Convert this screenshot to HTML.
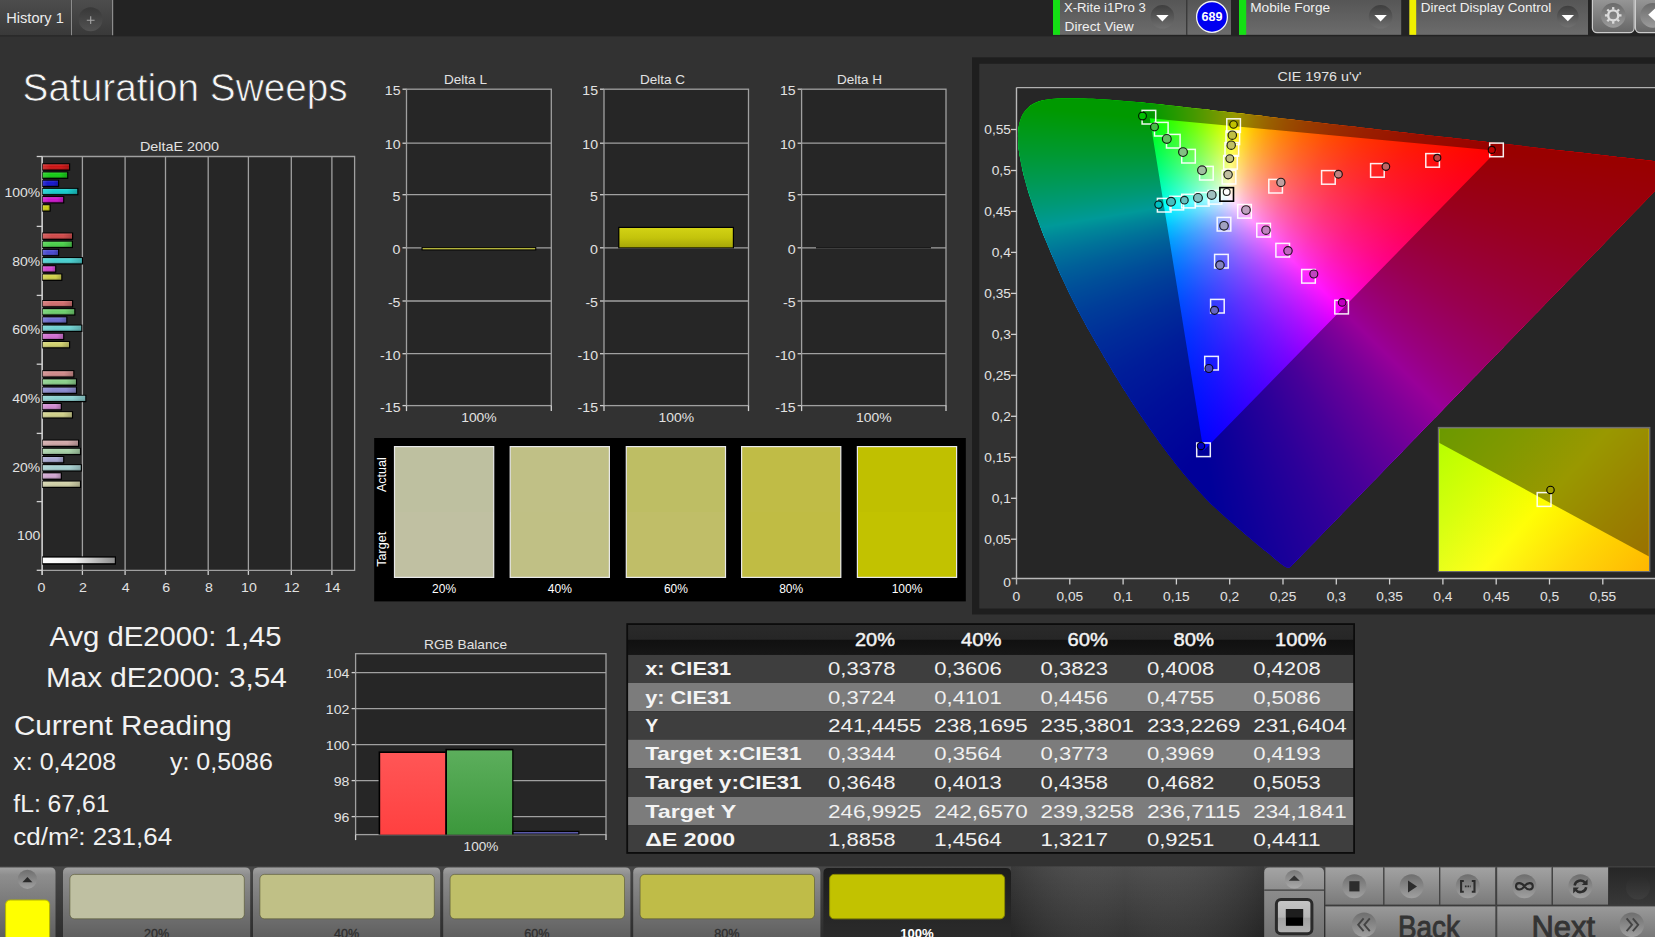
<!DOCTYPE html>
<html><head><meta charset="utf-8"><title>Saturation Sweeps</title>
<style>html,body{margin:0;padding:0;background:#323232;overflow:hidden}svg{display:block;font-family:'Liberation Sans', sans-serif}text{white-space:pre}</style></head>
<body>
<svg width="1655" height="937" viewBox="0 0 1655 937">
<defs>
<linearGradient id="tab" x1="0" y1="0" x2="0" y2="1"><stop offset="0" stop-color="#4d4d4d"/><stop offset="1" stop-color="#393939"/></linearGradient>
<linearGradient id="btn" x1="0" y1="0" x2="0" y2="1"><stop offset="0" stop-color="#565656"/><stop offset="1" stop-color="#6c6c6c"/></linearGradient>
<linearGradient id="dd" x1="0" y1="0" x2="0" y2="1"><stop offset="0" stop-color="#3e3e3e"/><stop offset="1" stop-color="#707070"/></linearGradient>
<linearGradient id="gear" x1="0" y1="0" x2="0" y2="1"><stop offset="0" stop-color="#5a5a5a"/><stop offset="0.5" stop-color="#4a4a4a"/><stop offset="1" stop-color="#6a6a6a"/></linearGradient>
<linearGradient id="plusc" x1="0" y1="0" x2="0" y2="1"><stop offset="0" stop-color="#383838"/><stop offset="1" stop-color="#525252"/></linearGradient>
<linearGradient id="gearb" x1="0" y1="0" x2="0" y2="1"><stop offset="0" stop-color="#9e9e9e"/><stop offset="1" stop-color="#666666"/></linearGradient>
<linearGradient id="gearc" x1="0" y1="0" x2="0" y2="1"><stop offset="0" stop-color="#6a6a6a"/><stop offset="1" stop-color="#9c9c9c"/></linearGradient>
<linearGradient id="barsh" x1="0" y1="0" x2="0" y2="1"><stop offset="0" stop-color="rgba(255,255,255,0.16)"/><stop offset="0.45" stop-color="rgba(255,255,255,0)"/><stop offset="1" stop-color="rgba(0,0,0,0.22)"/></linearGradient>
<linearGradient id="barshh" x1="0" y1="0" x2="1" y2="0"><stop offset="0" stop-color="rgba(255,255,255,0.12)"/><stop offset="0.3" stop-color="rgba(255,255,255,0)"/><stop offset="0.7" stop-color="rgba(0,0,0,0)"/><stop offset="1" stop-color="rgba(0,0,0,0.18)"/></linearGradient>
<linearGradient id="wbar" x1="0" y1="0" x2="1" y2="0"><stop offset="0" stop-color="#ffffff"/><stop offset="0.45" stop-color="#f0f0f0"/><stop offset="1" stop-color="#8c8c8c"/></linearGradient>
<linearGradient id="ybar" x1="0" y1="0" x2="0" y2="1"><stop offset="0" stop-color="#d2d214"/><stop offset="0.5" stop-color="#c4c40c"/><stop offset="1" stop-color="#a6a608"/></linearGradient>
<clipPath id="locus"><path d="M1290.3 567.0C1290.1 567.0 1289.9 567.5 1289.1 567.5C1288.3 567.5 1287.1 567.6 1285.4 566.7C1283.7 565.8 1282.0 564.5 1278.9 562.0C1275.8 559.5 1272.0 556.2 1266.7 551.8C1261.3 547.4 1255.2 542.6 1246.8 535.4C1238.5 528.3 1225.0 516.8 1216.6 509.0C1208.2 501.2 1204.4 497.3 1196.6 488.6C1188.9 479.8 1179.7 469.2 1170.1 456.5C1160.4 443.8 1149.6 429.0 1138.8 412.6C1127.9 396.2 1115.9 376.9 1104.8 358.0C1093.7 339.0 1081.8 318.2 1072.1 298.9C1062.4 279.6 1053.7 259.6 1046.5 242.2C1039.4 224.8 1033.6 208.3 1029.2 194.4C1024.8 180.5 1022.1 168.9 1020.2 158.9C1018.3 148.8 1017.8 141.1 1018.0 134.1C1018.2 127.2 1019.5 121.8 1021.4 117.1C1023.4 112.5 1026.3 109.0 1029.6 106.3C1032.9 103.6 1036.9 102.1 1041.1 100.8C1045.4 99.6 1050.1 99.2 1054.9 98.8C1059.7 98.4 1062.2 98.2 1069.9 98.3C1077.5 98.4 1089.8 98.6 1101.0 99.2C1112.1 99.9 1123.5 100.9 1136.6 102.1C1149.8 103.4 1163.7 104.9 1179.7 106.6C1195.7 108.4 1213.1 110.4 1232.5 112.6C1251.9 114.8 1273.3 117.3 1296.2 119.9C1319.1 122.6 1344.8 125.5 1369.9 128.4C1395.0 131.3 1422.1 134.5 1446.6 137.3C1471.1 140.1 1495.9 142.9 1516.6 145.3C1537.4 147.7 1555.6 149.8 1571.1 151.6C1586.6 153.4 1598.6 154.8 1609.7 156.0C1620.9 157.3 1630.2 158.4 1638.0 159.3C1645.8 160.2 1651.7 160.9 1656.6 161.4C1661.6 162.0 1664.2 162.3 1667.7 162.7C1671.1 163.1 1675.1 163.6 1677.3 163.8C1679.5 164.1 1680.4 164.2 1681.0 164.3Z"/></clipPath>
<clipPath id="plotclip"><rect x="1016.5" y="87.6" width="643.5" height="490.9"/></clipPath>
<linearGradient id="w1" gradientUnits="userSpaceOnUse" x1="1227.4" y1="195.6" x2="1487.3" y2="149.9"><stop offset="0" stop-color="#ffffff"/><stop offset="0.25" stop-color="#ff605e"/><stop offset="0.5" stop-color="#ff2c2a"/><stop offset="0.75" stop-color="#ff1210"/><stop offset="1" stop-color="#ff0200"/></linearGradient>
<linearGradient id="w2" gradientUnits="userSpaceOnUse" x1="1227.4" y1="195.6" x2="1468.0" y2="148.1"><stop offset="0" stop-color="#ffffff"/><stop offset="0.25" stop-color="#ff6762"/><stop offset="0.5" stop-color="#ff322c"/><stop offset="0.75" stop-color="#ff1711"/><stop offset="1" stop-color="#ff0700"/></linearGradient>
<linearGradient id="w3" gradientUnits="userSpaceOnUse" x1="1227.4" y1="195.6" x2="1448.7" y2="146.3"><stop offset="0" stop-color="#ffffff"/><stop offset="0.25" stop-color="#ff6e66"/><stop offset="0.5" stop-color="#ff392e"/><stop offset="0.75" stop-color="#ff1e12"/><stop offset="1" stop-color="#ff0d00"/></linearGradient>
<linearGradient id="w4" gradientUnits="userSpaceOnUse" x1="1227.4" y1="195.6" x2="1429.4" y2="144.5"><stop offset="0" stop-color="#ffffff"/><stop offset="0.25" stop-color="#ff756a"/><stop offset="0.5" stop-color="#ff4131"/><stop offset="0.75" stop-color="#ff2513"/><stop offset="1" stop-color="#ff1400"/></linearGradient>
<linearGradient id="w5" gradientUnits="userSpaceOnUse" x1="1227.4" y1="195.6" x2="1410.2" y2="142.6"><stop offset="0" stop-color="#ffffff"/><stop offset="0.25" stop-color="#ff7e6e"/><stop offset="0.5" stop-color="#ff4934"/><stop offset="0.75" stop-color="#ff2d14"/><stop offset="1" stop-color="#ff1b00"/></linearGradient>
<linearGradient id="w6" gradientUnits="userSpaceOnUse" x1="1227.4" y1="195.6" x2="1390.9" y2="140.8"><stop offset="0" stop-color="#ffffff"/><stop offset="0.25" stop-color="#ff8773"/><stop offset="0.5" stop-color="#ff5337"/><stop offset="0.75" stop-color="#ff3615"/><stop offset="1" stop-color="#ff2400"/></linearGradient>
<linearGradient id="w7" gradientUnits="userSpaceOnUse" x1="1227.4" y1="195.6" x2="1371.6" y2="139.0"><stop offset="0" stop-color="#ffffff"/><stop offset="0.25" stop-color="#ff9178"/><stop offset="0.5" stop-color="#ff5e3b"/><stop offset="0.75" stop-color="#ff4117"/><stop offset="1" stop-color="#ff2e00"/></linearGradient>
<linearGradient id="w8" gradientUnits="userSpaceOnUse" x1="1227.4" y1="195.6" x2="1352.3" y2="137.2"><stop offset="0" stop-color="#ffffff"/><stop offset="0.25" stop-color="#ff9c7e"/><stop offset="0.5" stop-color="#ff6b3f"/><stop offset="0.75" stop-color="#ff4e19"/><stop offset="1" stop-color="#ff3a00"/></linearGradient>
<linearGradient id="w9" gradientUnits="userSpaceOnUse" x1="1227.4" y1="195.6" x2="1333.0" y2="135.4"><stop offset="0" stop-color="#ffffff"/><stop offset="0.25" stop-color="#ffa885"/><stop offset="0.5" stop-color="#ff7944"/><stop offset="0.75" stop-color="#ff5d1b"/><stop offset="1" stop-color="#ff4900"/></linearGradient>
<linearGradient id="w10" gradientUnits="userSpaceOnUse" x1="1227.4" y1="195.6" x2="1313.7" y2="133.6"><stop offset="0" stop-color="#ffffff"/><stop offset="0.25" stop-color="#ffb58c"/><stop offset="0.5" stop-color="#ff8a49"/><stop offset="0.75" stop-color="#ff6f1e"/><stop offset="1" stop-color="#ff5b00"/></linearGradient>
<linearGradient id="w11" gradientUnits="userSpaceOnUse" x1="1227.4" y1="195.6" x2="1294.4" y2="131.8"><stop offset="0" stop-color="#ffffff"/><stop offset="0.25" stop-color="#ffc493"/><stop offset="0.5" stop-color="#ff9e50"/><stop offset="0.75" stop-color="#ff8522"/><stop offset="1" stop-color="#ff7200"/></linearGradient>
<linearGradient id="w12" gradientUnits="userSpaceOnUse" x1="1227.4" y1="195.6" x2="1275.1" y2="130.0"><stop offset="0" stop-color="#ffffff"/><stop offset="0.25" stop-color="#ffd49c"/><stop offset="0.5" stop-color="#ffb758"/><stop offset="0.75" stop-color="#ffa126"/><stop offset="1" stop-color="#ff9000"/></linearGradient>
<linearGradient id="w13" gradientUnits="userSpaceOnUse" x1="1227.4" y1="195.6" x2="1255.8" y2="128.2"><stop offset="0" stop-color="#ffffff"/><stop offset="0.25" stop-color="#ffe7a6"/><stop offset="0.5" stop-color="#ffd462"/><stop offset="0.75" stop-color="#ffc52c"/><stop offset="1" stop-color="#ffb900"/></linearGradient>
<linearGradient id="w14" gradientUnits="userSpaceOnUse" x1="1227.4" y1="195.6" x2="1236.6" y2="126.4"><stop offset="0" stop-color="#ffffff"/><stop offset="0.25" stop-color="#fffcb1"/><stop offset="0.5" stop-color="#fff96e"/><stop offset="0.75" stop-color="#fff734"/><stop offset="1" stop-color="#fff500"/></linearGradient>
<linearGradient id="w15" gradientUnits="userSpaceOnUse" x1="1227.4" y1="195.6" x2="1217.3" y2="124.6"><stop offset="0" stop-color="#ffffff"/><stop offset="0.25" stop-color="#ebffb0"/><stop offset="0.5" stop-color="#dbff6c"/><stop offset="0.75" stop-color="#cdff32"/><stop offset="1" stop-color="#c0ff00"/></linearGradient>
<linearGradient id="w16" gradientUnits="userSpaceOnUse" x1="1227.4" y1="195.6" x2="1198.0" y2="122.7"><stop offset="0" stop-color="#ffffff"/><stop offset="0.25" stop-color="#d6ffac"/><stop offset="0.5" stop-color="#b4ff68"/><stop offset="0.75" stop-color="#98ff30"/><stop offset="1" stop-color="#81ff00"/></linearGradient>
<linearGradient id="w17" gradientUnits="userSpaceOnUse" x1="1227.4" y1="195.6" x2="1178.7" y2="120.9"><stop offset="0" stop-color="#ffffff"/><stop offset="0.25" stop-color="#c1ffa9"/><stop offset="0.5" stop-color="#90ff64"/><stop offset="0.75" stop-color="#69ff2d"/><stop offset="1" stop-color="#48ff00"/></linearGradient>
<linearGradient id="w18" gradientUnits="userSpaceOnUse" x1="1227.4" y1="195.6" x2="1159.4" y2="119.1"><stop offset="0" stop-color="#ffffff"/><stop offset="0.25" stop-color="#adffa5"/><stop offset="0.5" stop-color="#6fff61"/><stop offset="0.75" stop-color="#3eff2b"/><stop offset="1" stop-color="#17ff00"/></linearGradient>
<linearGradient id="w19" gradientUnits="userSpaceOnUse" x1="1227.4" y1="195.6" x2="1151.2" y2="127.5"><stop offset="0" stop-color="#ffffff"/><stop offset="0.25" stop-color="#a5ffac"/><stop offset="0.5" stop-color="#61ff6d"/><stop offset="0.75" stop-color="#2bff3c"/><stop offset="1" stop-color="#00ff14"/></linearGradient>
<linearGradient id="w20" gradientUnits="userSpaceOnUse" x1="1227.4" y1="195.6" x2="1154.2" y2="145.9"><stop offset="0" stop-color="#ffffff"/><stop offset="0.25" stop-color="#a8ffbe"/><stop offset="0.5" stop-color="#64ff8b"/><stop offset="0.75" stop-color="#2dff62"/><stop offset="1" stop-color="#00ff40"/></linearGradient>
<linearGradient id="w21" gradientUnits="userSpaceOnUse" x1="1227.4" y1="195.6" x2="1157.2" y2="164.4"><stop offset="0" stop-color="#ffffff"/><stop offset="0.25" stop-color="#acffd1"/><stop offset="0.5" stop-color="#68ffac"/><stop offset="0.75" stop-color="#30ff8d"/><stop offset="1" stop-color="#00ff72"/></linearGradient>
<linearGradient id="w22" gradientUnits="userSpaceOnUse" x1="1227.4" y1="195.6" x2="1160.2" y2="182.9"><stop offset="0" stop-color="#ffffff"/><stop offset="0.25" stop-color="#b0ffe5"/><stop offset="0.5" stop-color="#6cffcf"/><stop offset="0.75" stop-color="#32ffbc"/><stop offset="1" stop-color="#00ffab"/></linearGradient>
<linearGradient id="w23" gradientUnits="userSpaceOnUse" x1="1227.4" y1="195.6" x2="1163.2" y2="201.4"><stop offset="0" stop-color="#ffffff"/><stop offset="0.25" stop-color="#b4fff9"/><stop offset="0.5" stop-color="#71fff5"/><stop offset="0.75" stop-color="#35fff0"/><stop offset="1" stop-color="#00ffec"/></linearGradient>
<linearGradient id="w24" gradientUnits="userSpaceOnUse" x1="1227.4" y1="195.6" x2="1166.2" y2="219.8"><stop offset="0" stop-color="#ffffff"/><stop offset="0.25" stop-color="#adf0ff"/><stop offset="0.5" stop-color="#69e4ff"/><stop offset="0.75" stop-color="#30d9ff"/><stop offset="1" stop-color="#00d0ff"/></linearGradient>
<linearGradient id="w25" gradientUnits="userSpaceOnUse" x1="1227.4" y1="195.6" x2="1169.2" y2="238.3"><stop offset="0" stop-color="#ffffff"/><stop offset="0.25" stop-color="#a3deff"/><stop offset="0.5" stop-color="#5fc5ff"/><stop offset="0.75" stop-color="#2ab2ff"/><stop offset="1" stop-color="#00a2ff"/></linearGradient>
<linearGradient id="w26" gradientUnits="userSpaceOnUse" x1="1227.4" y1="195.6" x2="1172.2" y2="256.8"><stop offset="0" stop-color="#ffffff"/><stop offset="0.25" stop-color="#9bcdff"/><stop offset="0.5" stop-color="#57abff"/><stop offset="0.75" stop-color="#2593ff"/><stop offset="1" stop-color="#0080ff"/></linearGradient>
<linearGradient id="w27" gradientUnits="userSpaceOnUse" x1="1227.4" y1="195.6" x2="1175.1" y2="275.3"><stop offset="0" stop-color="#ffffff"/><stop offset="0.25" stop-color="#93beff"/><stop offset="0.5" stop-color="#5096ff"/><stop offset="0.75" stop-color="#217bff"/><stop offset="1" stop-color="#0066ff"/></linearGradient>
<linearGradient id="w28" gradientUnits="userSpaceOnUse" x1="1227.4" y1="195.6" x2="1178.1" y2="293.8"><stop offset="0" stop-color="#ffffff"/><stop offset="0.25" stop-color="#8cb1ff"/><stop offset="0.5" stop-color="#4a84ff"/><stop offset="0.75" stop-color="#1e67ff"/><stop offset="1" stop-color="#0052ff"/></linearGradient>
<linearGradient id="w29" gradientUnits="userSpaceOnUse" x1="1227.4" y1="195.6" x2="1181.1" y2="312.2"><stop offset="0" stop-color="#ffffff"/><stop offset="0.25" stop-color="#86a5ff"/><stop offset="0.5" stop-color="#4474ff"/><stop offset="0.75" stop-color="#1c56ff"/><stop offset="1" stop-color="#0041ff"/></linearGradient>
<linearGradient id="w30" gradientUnits="userSpaceOnUse" x1="1227.4" y1="195.6" x2="1184.1" y2="330.7"><stop offset="0" stop-color="#ffffff"/><stop offset="0.25" stop-color="#809aff"/><stop offset="0.5" stop-color="#4067ff"/><stop offset="0.75" stop-color="#1a48ff"/><stop offset="1" stop-color="#0034ff"/></linearGradient>
<linearGradient id="w31" gradientUnits="userSpaceOnUse" x1="1227.4" y1="195.6" x2="1187.1" y2="349.2"><stop offset="0" stop-color="#ffffff"/><stop offset="0.25" stop-color="#7b8fff"/><stop offset="0.5" stop-color="#3c5bff"/><stop offset="0.75" stop-color="#183cff"/><stop offset="1" stop-color="#0028ff"/></linearGradient>
<linearGradient id="w32" gradientUnits="userSpaceOnUse" x1="1227.4" y1="195.6" x2="1190.1" y2="367.7"><stop offset="0" stop-color="#ffffff"/><stop offset="0.25" stop-color="#7686ff"/><stop offset="0.5" stop-color="#3950ff"/><stop offset="0.75" stop-color="#1632ff"/><stop offset="1" stop-color="#001fff"/></linearGradient>
<linearGradient id="w33" gradientUnits="userSpaceOnUse" x1="1227.4" y1="195.6" x2="1193.1" y2="386.1"><stop offset="0" stop-color="#ffffff"/><stop offset="0.25" stop-color="#717dff"/><stop offset="0.5" stop-color="#3647ff"/><stop offset="0.75" stop-color="#1529ff"/><stop offset="1" stop-color="#0016ff"/></linearGradient>
<linearGradient id="w34" gradientUnits="userSpaceOnUse" x1="1227.4" y1="195.6" x2="1196.0" y2="404.6"><stop offset="0" stop-color="#ffffff"/><stop offset="0.25" stop-color="#6d75ff"/><stop offset="0.5" stop-color="#333fff"/><stop offset="0.75" stop-color="#1421ff"/><stop offset="1" stop-color="#000fff"/></linearGradient>
<linearGradient id="w35" gradientUnits="userSpaceOnUse" x1="1227.4" y1="195.6" x2="1199.0" y2="423.1"><stop offset="0" stop-color="#ffffff"/><stop offset="0.25" stop-color="#696eff"/><stop offset="0.5" stop-color="#3037ff"/><stop offset="0.75" stop-color="#121aff"/><stop offset="1" stop-color="#0008ff"/></linearGradient>
<linearGradient id="w36" gradientUnits="userSpaceOnUse" x1="1227.4" y1="195.6" x2="1202.0" y2="441.6"><stop offset="0" stop-color="#ffffff"/><stop offset="0.25" stop-color="#6567ff"/><stop offset="0.5" stop-color="#2e30ff"/><stop offset="0.75" stop-color="#1114ff"/><stop offset="1" stop-color="#0003ff"/></linearGradient>
<linearGradient id="w37" gradientUnits="userSpaceOnUse" x1="1227.4" y1="195.6" x2="1211.7" y2="442.5"><stop offset="0" stop-color="#ffffff"/><stop offset="0.25" stop-color="#6a65ff"/><stop offset="0.5" stop-color="#352eff"/><stop offset="0.75" stop-color="#1911ff"/><stop offset="1" stop-color="#0800ff"/></linearGradient>
<linearGradient id="w38" gradientUnits="userSpaceOnUse" x1="1227.4" y1="195.6" x2="1228.0" y2="425.8"><stop offset="0" stop-color="#ffffff"/><stop offset="0.25" stop-color="#7869ff"/><stop offset="0.5" stop-color="#4530ff"/><stop offset="0.75" stop-color="#2b12ff"/><stop offset="1" stop-color="#1a00ff"/></linearGradient>
<linearGradient id="w39" gradientUnits="userSpaceOnUse" x1="1227.4" y1="195.6" x2="1244.3" y2="409.1"><stop offset="0" stop-color="#ffffff"/><stop offset="0.25" stop-color="#876dff"/><stop offset="0.5" stop-color="#5833ff"/><stop offset="0.75" stop-color="#3e14ff"/><stop offset="1" stop-color="#2e00ff"/></linearGradient>
<linearGradient id="w40" gradientUnits="userSpaceOnUse" x1="1227.4" y1="195.6" x2="1260.6" y2="392.5"><stop offset="0" stop-color="#ffffff"/><stop offset="0.25" stop-color="#9871ff"/><stop offset="0.5" stop-color="#6c36ff"/><stop offset="0.75" stop-color="#5415ff"/><stop offset="1" stop-color="#4500ff"/></linearGradient>
<linearGradient id="w41" gradientUnits="userSpaceOnUse" x1="1227.4" y1="195.6" x2="1276.9" y2="375.8"><stop offset="0" stop-color="#ffffff"/><stop offset="0.25" stop-color="#a976ff"/><stop offset="0.5" stop-color="#8339ff"/><stop offset="0.75" stop-color="#6d16ff"/><stop offset="1" stop-color="#6000ff"/></linearGradient>
<linearGradient id="w42" gradientUnits="userSpaceOnUse" x1="1227.4" y1="195.6" x2="1293.2" y2="359.1"><stop offset="0" stop-color="#ffffff"/><stop offset="0.25" stop-color="#bc7bff"/><stop offset="0.5" stop-color="#9c3cff"/><stop offset="0.75" stop-color="#8a18ff"/><stop offset="1" stop-color="#7e00ff"/></linearGradient>
<linearGradient id="w43" gradientUnits="userSpaceOnUse" x1="1227.4" y1="195.6" x2="1309.5" y2="342.5"><stop offset="0" stop-color="#ffffff"/><stop offset="0.25" stop-color="#d180ff"/><stop offset="0.5" stop-color="#b940ff"/><stop offset="0.75" stop-color="#ab1aff"/><stop offset="1" stop-color="#a200ff"/></linearGradient>
<linearGradient id="w44" gradientUnits="userSpaceOnUse" x1="1227.4" y1="195.6" x2="1325.8" y2="325.8"><stop offset="0" stop-color="#ffffff"/><stop offset="0.25" stop-color="#e786ff"/><stop offset="0.5" stop-color="#da44ff"/><stop offset="0.75" stop-color="#d21cff"/><stop offset="1" stop-color="#cd00ff"/></linearGradient>
<linearGradient id="w45" gradientUnits="userSpaceOnUse" x1="1227.4" y1="195.6" x2="1342.1" y2="309.1"><stop offset="0" stop-color="#ffffff"/><stop offset="0.25" stop-color="#ff8cfe"/><stop offset="0.5" stop-color="#ff49fe"/><stop offset="0.75" stop-color="#ff1efe"/><stop offset="1" stop-color="#ff00fe"/></linearGradient>
<linearGradient id="w46" gradientUnits="userSpaceOnUse" x1="1227.4" y1="195.6" x2="1358.4" y2="292.5"><stop offset="0" stop-color="#ffffff"/><stop offset="0.25" stop-color="#ff85e6"/><stop offset="0.5" stop-color="#ff44d9"/><stop offset="0.75" stop-color="#ff1bd1"/><stop offset="1" stop-color="#ff00cb"/></linearGradient>
<linearGradient id="w47" gradientUnits="userSpaceOnUse" x1="1227.4" y1="195.6" x2="1374.7" y2="275.8"><stop offset="0" stop-color="#ffffff"/><stop offset="0.25" stop-color="#ff7ed0"/><stop offset="0.5" stop-color="#ff3fb9"/><stop offset="0.75" stop-color="#ff19ab"/><stop offset="1" stop-color="#ff00a2"/></linearGradient>
<linearGradient id="w48" gradientUnits="userSpaceOnUse" x1="1227.4" y1="195.6" x2="1391.0" y2="259.1"><stop offset="0" stop-color="#ffffff"/><stop offset="0.25" stop-color="#ff78bc"/><stop offset="0.5" stop-color="#ff3b9d"/><stop offset="0.75" stop-color="#ff178c"/><stop offset="1" stop-color="#ff0080"/></linearGradient>
<linearGradient id="w49" gradientUnits="userSpaceOnUse" x1="1227.4" y1="195.6" x2="1407.3" y2="242.5"><stop offset="0" stop-color="#ffffff"/><stop offset="0.25" stop-color="#ff73aa"/><stop offset="0.5" stop-color="#ff3785"/><stop offset="0.75" stop-color="#ff1571"/><stop offset="1" stop-color="#ff0064"/></linearGradient>
<linearGradient id="w50" gradientUnits="userSpaceOnUse" x1="1227.4" y1="195.6" x2="1423.6" y2="225.8"><stop offset="0" stop-color="#ffffff"/><stop offset="0.25" stop-color="#ff6e99"/><stop offset="0.5" stop-color="#ff3470"/><stop offset="0.75" stop-color="#ff145a"/><stop offset="1" stop-color="#ff004c"/></linearGradient>
<linearGradient id="w51" gradientUnits="userSpaceOnUse" x1="1227.4" y1="195.6" x2="1439.9" y2="209.1"><stop offset="0" stop-color="#ffffff"/><stop offset="0.25" stop-color="#ff6a8a"/><stop offset="0.5" stop-color="#ff315d"/><stop offset="0.75" stop-color="#ff1345"/><stop offset="1" stop-color="#ff0037"/></linearGradient>
<linearGradient id="w52" gradientUnits="userSpaceOnUse" x1="1227.4" y1="195.6" x2="1456.2" y2="192.5"><stop offset="0" stop-color="#ffffff"/><stop offset="0.25" stop-color="#ff667c"/><stop offset="0.5" stop-color="#ff2e4c"/><stop offset="0.75" stop-color="#ff1234"/><stop offset="1" stop-color="#ff0025"/></linearGradient>
<linearGradient id="w53" gradientUnits="userSpaceOnUse" x1="1227.4" y1="195.6" x2="1472.5" y2="175.8"><stop offset="0" stop-color="#ffffff"/><stop offset="0.25" stop-color="#ff626f"/><stop offset="0.5" stop-color="#ff2c3d"/><stop offset="0.75" stop-color="#ff1124"/><stop offset="1" stop-color="#ff0015"/></linearGradient>
<linearGradient id="w54" gradientUnits="userSpaceOnUse" x1="1227.4" y1="195.6" x2="1488.8" y2="159.1"><stop offset="0" stop-color="#ffffff"/><stop offset="0.25" stop-color="#ff5e62"/><stop offset="0.5" stop-color="#ff2a2f"/><stop offset="0.75" stop-color="#ff1016"/><stop offset="1" stop-color="#ff0006"/></linearGradient>
<linearGradient id="ins" gradientUnits="userSpaceOnUse" x1="1440" y1="500" x2="1650" y2="560"><stop offset="0" stop-color="#b8ff00"/><stop offset="0.5" stop-color="#ffff10"/><stop offset="1" stop-color="#ffb400"/></linearGradient>
<clipPath id="insclip"><rect x="1439.4" y="428.5" width="209.4" height="142.0"/></clipPath>
<linearGradient id="rbar" x1="0" y1="0" x2="0" y2="1"><stop offset="0" stop-color="#ff5656"/><stop offset="1" stop-color="#ff4040"/></linearGradient>
<linearGradient id="gbar" x1="0" y1="0" x2="0" y2="1"><stop offset="0" stop-color="#5cae5c"/><stop offset="1" stop-color="#3c983c"/></linearGradient>
<linearGradient id="thead" x1="0" y1="0" x2="0" y2="1"><stop offset="0" stop-color="#2a2a2a"/><stop offset="0.48" stop-color="#262626"/><stop offset="0.5" stop-color="#101010"/><stop offset="1" stop-color="#161616"/></linearGradient>
<linearGradient id="bbar" x1="0" y1="0" x2="0" y2="1"><stop offset="0" stop-color="#474747"/><stop offset="1" stop-color="#2e2e2e"/></linearGradient>
<linearGradient id="pan" x1="0" y1="0" x2="0" y2="1"><stop offset="0" stop-color="#a2a2a2"/><stop offset="0.1" stop-color="#8e8e8e"/><stop offset="1" stop-color="#5c5c5c"/></linearGradient>
<linearGradient id="pansel" x1="0" y1="0" x2="0" y2="1"><stop offset="0" stop-color="#1c1c1c"/><stop offset="1" stop-color="#2c2c2c"/></linearGradient>
<linearGradient id="cbtn" x1="0" y1="0" x2="0" y2="1"><stop offset="0" stop-color="#9a9a9a"/><stop offset="1" stop-color="#6e6e6e"/></linearGradient>
<linearGradient id="cbtn2" x1="0" y1="0" x2="0" y2="1"><stop offset="0" stop-color="#a2a2a2"/><stop offset="1" stop-color="#7a7a7a"/></linearGradient>
<linearGradient id="circ" x1="0" y1="0" x2="0" y2="1"><stop offset="0" stop-color="#6e6e6e"/><stop offset="1" stop-color="#a0a0a0"/></linearGradient>
<linearGradient id="bbh" x1="0" y1="0" x2="1" y2="0"><stop offset="0" stop-color="rgba(0,0,0,0.18)"/><stop offset="0.45" stop-color="rgba(255,255,255,0.03)"/><stop offset="1" stop-color="rgba(0,0,0,0.2)"/></linearGradient>
<linearGradient id="mini1" x1="0" y1="0" x2="0" y2="1"><stop offset="0" stop-color="#a4a4a4"/><stop offset="1" stop-color="#8e8e8e"/></linearGradient>
<linearGradient id="mini2" x1="0" y1="0" x2="0" y2="1"><stop offset="0" stop-color="#8c8c8c"/><stop offset="1" stop-color="#6c6c6c"/></linearGradient>
<linearGradient id="circ2" x1="0" y1="0" x2="0" y2="1"><stop offset="0" stop-color="#787878"/><stop offset="1" stop-color="#aaaaaa"/></linearGradient>
<linearGradient id="stopo" x1="0" y1="0" x2="0" y2="1"><stop offset="0" stop-color="#c6c6c6"/><stop offset="0.52" stop-color="#b6b6b6"/><stop offset="0.53" stop-color="#a2a2a2"/><stop offset="1" stop-color="#b2b2b2"/></linearGradient>
<linearGradient id="dk1" x1="0" y1="0" x2="0" y2="1"><stop offset="0" stop-color="#262626"/><stop offset="1" stop-color="#383838"/></linearGradient>
<linearGradient id="dk2" x1="0" y1="0" x2="0" y2="1"><stop offset="0" stop-color="#2a2a2a"/><stop offset="1" stop-color="#3e3e3e"/></linearGradient>
</defs>
<rect x="0.0" y="0.0" width="1655.0" height="937.0" fill="#323232"/>
<rect x="0.0" y="0.0" width="1655.0" height="36.3" fill="#232323"/>
<rect x="0.0" y="0.0" width="71.0" height="35.3" fill="url(#tab)"/>
<text x="6.3" y="23.0" font-size="14.5" fill="#ececec" textLength="57.5" lengthAdjust="spacingAndGlyphs">History 1</text>
<line x1="71.6" y1="0.0" x2="71.6" y2="35.3" stroke="#8c8c8c" stroke-width="1.2"/>
<rect x="72.2" y="0.0" width="40.0" height="35.3" fill="url(#tab)"/>
<line x1="112.6" y1="0.0" x2="112.6" y2="35.3" stroke="#8c8c8c" stroke-width="1.2"/>
<circle cx="90.6" cy="19.3" r="12" fill="url(#plusc)"/>
<path d="M86.8 20.2h7.8M90.7 16.3v7.8" stroke="#a8a8a8" stroke-width="1.1" fill="none"/>
<rect x="1053.0" y="0.0" width="133.5" height="34.8" fill="url(#btn)"/>
<rect x="1053.0" y="0.0" width="7.0" height="34.8" fill="#14e014"/>
<text x="1064.0" y="11.8" font-size="13.2" fill="#f0f0f0" textLength="81.7" lengthAdjust="spacingAndGlyphs">X-Rite i1Pro 3</text>
<text x="1064.6" y="31.0" font-size="13.2" fill="#f0f0f0" textLength="69.0" lengthAdjust="spacingAndGlyphs">Direct View</text>
<circle cx="1162.4" cy="16.8" r="11.8" fill="url(#dd)"/>
<path d="M1156.2 15.1h12.4l-6.2 6.3z" fill="#ffffff"/>
<line x1="1186.6" y1="0.0" x2="1186.6" y2="34.8" stroke="#3a3a3a" stroke-width="1.2"/>
<rect x="1187.3" y="0.0" width="43.7" height="34.8" fill="url(#btn)"/>
<circle cx="1212" cy="16.9" r="15.4" fill="#0000f0" stroke="#f4f4f4" stroke-width="1.3"/>
<text x="1212.0" y="21.4" font-size="12.4" fill="#ffffff" text-anchor="middle" font-weight="bold" textLength="21.0" lengthAdjust="spacingAndGlyphs">689</text>
<rect x="1239.0" y="0.0" width="162.2" height="34.8" fill="url(#btn)"/>
<rect x="1239.0" y="0.0" width="7.2" height="34.8" fill="#14e014"/>
<text x="1250.2" y="11.8" font-size="13.2" fill="#f0f0f0" textLength="80.0" lengthAdjust="spacingAndGlyphs">Mobile Forge</text>
<circle cx="1380.6" cy="16.8" r="11.8" fill="url(#dd)"/>
<path d="M1374.4 15.1h12.4l-6.2 6.3z" fill="#ffffff"/>
<rect x="1409.4" y="0.0" width="178.6" height="34.8" fill="url(#btn)"/>
<rect x="1409.4" y="0.0" width="6.8" height="34.8" fill="#f0f000"/>
<text x="1420.7" y="11.8" font-size="13.2" fill="#f0f0f0" textLength="130.5" lengthAdjust="spacingAndGlyphs">Direct Display Control</text>
<circle cx="1567.8" cy="16.6" r="10.8" fill="url(#dd)"/>
<path d="M1561.6 14.9h12.4l-6.2 6.3z" fill="#ffffff"/>
<rect x="1592.4" y="-6" width="41.8" height="38.6" rx="4.6" fill="url(#gearb)" stroke="#cccccc" stroke-width="1.2"/>
<circle cx="1613.2" cy="15.4" r="12.3" fill="url(#gearc)"/>
<g stroke="#dcdcdc" stroke-width="2.3" stroke-linecap="butt"><line x1="1613.20" y1="21.20" x2="1613.20" y2="23.70"/><line x1="1609.10" y1="19.50" x2="1607.33" y2="21.27"/><line x1="1607.40" y1="15.40" x2="1604.90" y2="15.40"/><line x1="1609.10" y1="11.30" x2="1607.33" y2="9.53"/><line x1="1613.20" y1="9.60" x2="1613.20" y2="7.10"/><line x1="1617.30" y1="11.30" x2="1619.07" y2="9.53"/><line x1="1619.00" y1="15.40" x2="1621.50" y2="15.40"/><line x1="1617.30" y1="19.50" x2="1619.07" y2="21.27"/></g>
<circle cx="1613.2" cy="15.4" r="5.05" fill="none" stroke="#dcdcdc" stroke-width="2.4"/>
<rect x="1635.4" y="-6" width="41.8" height="38.6" rx="4.6" fill="url(#gearb)" stroke="#cccccc" stroke-width="1.2"/>
<circle cx="1652.6" cy="15.4" r="12.3" fill="url(#gearc)"/>
<path d="M1656 7.6v14.4l-7.8 -7.2z" fill="#ffffff"/>
<text x="22.6" y="100.5" font-size="39" fill="#f6f6f6" textLength="325.0" lengthAdjust="spacingAndGlyphs" stroke="#323232" stroke-width="0.7">Saturation Sweeps</text>
<rect x="42.2" y="156.5" width="312.4" height="413.8" fill="#262626"/>
<text x="179.5" y="151.0" font-size="13.5" fill="#e2e2e2" text-anchor="middle" textLength="79.0" lengthAdjust="spacingAndGlyphs">DeltaE 2000</text>
<line x1="42.2" y1="570.3" x2="42.2" y2="574.9" stroke="#d0d0d0" stroke-width="1.3"/>
<text x="37.5" y="591.8" font-size="13.6" fill="#e2e2e2" textLength="7.9" lengthAdjust="spacingAndGlyphs">0</text>
<line x1="82.4" y1="156.5" x2="82.4" y2="570.3" stroke="#a0a0a0" stroke-width="1.3"/>
<line x1="82.4" y1="570.3" x2="82.4" y2="574.9" stroke="#d0d0d0" stroke-width="1.3"/>
<text x="79.1" y="591.8" font-size="13.6" fill="#e2e2e2" textLength="7.9" lengthAdjust="spacingAndGlyphs">2</text>
<line x1="125.1" y1="156.5" x2="125.1" y2="570.3" stroke="#a0a0a0" stroke-width="1.3"/>
<line x1="125.1" y1="570.3" x2="125.1" y2="574.9" stroke="#d0d0d0" stroke-width="1.3"/>
<text x="121.8" y="591.8" font-size="13.6" fill="#e2e2e2" textLength="7.9" lengthAdjust="spacingAndGlyphs">4</text>
<line x1="165.5" y1="156.5" x2="165.5" y2="570.3" stroke="#a0a0a0" stroke-width="1.3"/>
<line x1="165.5" y1="570.3" x2="165.5" y2="574.9" stroke="#d0d0d0" stroke-width="1.3"/>
<text x="162.2" y="591.8" font-size="13.6" fill="#e2e2e2" textLength="7.9" lengthAdjust="spacingAndGlyphs">6</text>
<line x1="208.2" y1="156.5" x2="208.2" y2="570.3" stroke="#a0a0a0" stroke-width="1.3"/>
<line x1="208.2" y1="570.3" x2="208.2" y2="574.9" stroke="#d0d0d0" stroke-width="1.3"/>
<text x="204.9" y="591.8" font-size="13.6" fill="#e2e2e2" textLength="7.9" lengthAdjust="spacingAndGlyphs">8</text>
<line x1="248.4" y1="156.5" x2="248.4" y2="570.3" stroke="#a0a0a0" stroke-width="1.3"/>
<line x1="248.4" y1="570.3" x2="248.4" y2="574.9" stroke="#d0d0d0" stroke-width="1.3"/>
<text x="241.1" y="591.8" font-size="13.6" fill="#e2e2e2" textLength="15.7" lengthAdjust="spacingAndGlyphs">10</text>
<line x1="291.3" y1="156.5" x2="291.3" y2="570.3" stroke="#a0a0a0" stroke-width="1.3"/>
<line x1="291.3" y1="570.3" x2="291.3" y2="574.9" stroke="#d0d0d0" stroke-width="1.3"/>
<text x="284.0" y="591.8" font-size="13.6" fill="#e2e2e2" textLength="15.7" lengthAdjust="spacingAndGlyphs">12</text>
<line x1="331.9" y1="156.5" x2="331.9" y2="570.3" stroke="#a0a0a0" stroke-width="1.3"/>
<line x1="331.9" y1="570.3" x2="331.9" y2="574.9" stroke="#d0d0d0" stroke-width="1.3"/>
<text x="324.6" y="591.8" font-size="13.6" fill="#e2e2e2" textLength="15.7" lengthAdjust="spacingAndGlyphs">14</text>
<path d="M42.2 156.5H354.6V570.3H42.2Z" fill="none" stroke="#a0a0a0" stroke-width="1.3"/>
<line x1="42.2" y1="156.5" x2="42.2" y2="574.9" stroke="#c8c8c8" stroke-width="1.5"/>
<line x1="36.7" y1="156.5" x2="42.2" y2="156.5" stroke="#d0d0d0" stroke-width="1.3"/>
<line x1="36.7" y1="226.4" x2="42.2" y2="226.4" stroke="#d0d0d0" stroke-width="1.3"/>
<line x1="36.7" y1="295.4" x2="42.2" y2="295.4" stroke="#d0d0d0" stroke-width="1.3"/>
<line x1="36.7" y1="364.2" x2="42.2" y2="364.2" stroke="#d0d0d0" stroke-width="1.3"/>
<line x1="36.7" y1="433.4" x2="42.2" y2="433.4" stroke="#d0d0d0" stroke-width="1.3"/>
<line x1="36.7" y1="501.6" x2="42.2" y2="501.6" stroke="#d0d0d0" stroke-width="1.3"/>
<line x1="36.7" y1="570.3" x2="42.2" y2="570.3" stroke="#d0d0d0" stroke-width="1.3"/>
<text x="4.5" y="197.4" font-size="13.6" fill="#e2e2e2" textLength="35.8" lengthAdjust="spacingAndGlyphs">100%</text>
<text x="12.3" y="265.5" font-size="13.6" fill="#e2e2e2" textLength="28.0" lengthAdjust="spacingAndGlyphs">80%</text>
<text x="12.3" y="334.0" font-size="13.6" fill="#e2e2e2" textLength="28.0" lengthAdjust="spacingAndGlyphs">60%</text>
<text x="12.3" y="403.4" font-size="13.6" fill="#e2e2e2" textLength="28.0" lengthAdjust="spacingAndGlyphs">40%</text>
<text x="12.3" y="471.9" font-size="13.6" fill="#e2e2e2" textLength="28.0" lengthAdjust="spacingAndGlyphs">20%</text>
<text x="16.9" y="540.4" font-size="13.6" fill="#e2e2e2" textLength="23.4" lengthAdjust="spacingAndGlyphs">100</text>
<rect x="42.2" y="163.3" width="28.0" height="7.4" fill="#000000"/>
<rect x="42.8" y="164.3" width="26.2" height="5.2" fill="#cc1212"/>
<rect x="42.8" y="164.3" width="26.2" height="5.2" fill="url(#barsh)"/>
<rect x="42.8" y="164.3" width="26.2" height="5.2" fill="url(#barshh)"/>
<rect x="42.2" y="171.5" width="26.1" height="7.4" fill="#000000"/>
<rect x="42.8" y="172.5" width="24.3" height="5.2" fill="#12cc12"/>
<rect x="42.8" y="172.5" width="24.3" height="5.2" fill="url(#barsh)"/>
<rect x="42.8" y="172.5" width="24.3" height="5.2" fill="url(#barshh)"/>
<rect x="42.2" y="179.7" width="17.0" height="7.4" fill="#000000"/>
<rect x="42.8" y="180.7" width="15.2" height="5.2" fill="#1212cc"/>
<rect x="42.8" y="180.7" width="15.2" height="5.2" fill="url(#barsh)"/>
<rect x="42.8" y="180.7" width="15.2" height="5.2" fill="url(#barshh)"/>
<rect x="42.2" y="187.9" width="36.2" height="7.4" fill="#000000"/>
<rect x="42.8" y="188.9" width="34.4" height="5.2" fill="#12cccc"/>
<rect x="42.8" y="188.9" width="34.4" height="5.2" fill="url(#barsh)"/>
<rect x="42.8" y="188.9" width="34.4" height="5.2" fill="url(#barshh)"/>
<rect x="42.2" y="196.1" width="22.1" height="7.4" fill="#000000"/>
<rect x="42.8" y="197.1" width="20.3" height="5.2" fill="#cc12cc"/>
<rect x="42.8" y="197.1" width="20.3" height="5.2" fill="url(#barsh)"/>
<rect x="42.8" y="197.1" width="20.3" height="5.2" fill="url(#barshh)"/>
<rect x="42.2" y="204.3" width="8.5" height="7.4" fill="#000000"/>
<rect x="42.8" y="205.3" width="6.7" height="5.2" fill="#cccc12"/>
<rect x="42.8" y="205.3" width="6.7" height="5.2" fill="url(#barsh)"/>
<rect x="42.8" y="205.3" width="6.7" height="5.2" fill="url(#barshh)"/>
<rect x="42.2" y="232.5" width="31.0" height="7.4" fill="#000000"/>
<rect x="42.8" y="233.5" width="29.2" height="5.2" fill="#d04747"/>
<rect x="42.8" y="233.5" width="29.2" height="5.2" fill="url(#barsh)"/>
<rect x="42.8" y="233.5" width="29.2" height="5.2" fill="url(#barshh)"/>
<rect x="42.2" y="240.7" width="30.8" height="7.4" fill="#000000"/>
<rect x="42.8" y="241.7" width="29.0" height="5.2" fill="#47d047"/>
<rect x="42.8" y="241.7" width="29.0" height="5.2" fill="url(#barsh)"/>
<rect x="42.8" y="241.7" width="29.0" height="5.2" fill="url(#barshh)"/>
<rect x="42.2" y="248.9" width="17.0" height="7.4" fill="#000000"/>
<rect x="42.8" y="249.9" width="15.2" height="5.2" fill="#4747d0"/>
<rect x="42.8" y="249.9" width="15.2" height="5.2" fill="url(#barsh)"/>
<rect x="42.8" y="249.9" width="15.2" height="5.2" fill="url(#barshh)"/>
<rect x="42.2" y="257.1" width="40.9" height="7.4" fill="#000000"/>
<rect x="42.8" y="258.1" width="39.1" height="5.2" fill="#47d0d0"/>
<rect x="42.8" y="258.1" width="39.1" height="5.2" fill="url(#barsh)"/>
<rect x="42.8" y="258.1" width="39.1" height="5.2" fill="url(#barshh)"/>
<rect x="42.2" y="265.3" width="14.1" height="7.4" fill="#000000"/>
<rect x="42.8" y="266.3" width="12.3" height="5.2" fill="#d047d0"/>
<rect x="42.8" y="266.3" width="12.3" height="5.2" fill="url(#barsh)"/>
<rect x="42.8" y="266.3" width="12.3" height="5.2" fill="url(#barshh)"/>
<rect x="42.2" y="273.5" width="20.2" height="7.4" fill="#000000"/>
<rect x="42.8" y="274.5" width="18.4" height="5.2" fill="#d0d047"/>
<rect x="42.8" y="274.5" width="18.4" height="5.2" fill="url(#barsh)"/>
<rect x="42.8" y="274.5" width="18.4" height="5.2" fill="url(#barshh)"/>
<rect x="42.2" y="300.0" width="31.0" height="7.4" fill="#000000"/>
<rect x="42.8" y="301.0" width="29.2" height="5.2" fill="#d06c6c"/>
<rect x="42.8" y="301.0" width="29.2" height="5.2" fill="url(#barsh)"/>
<rect x="42.8" y="301.0" width="29.2" height="5.2" fill="url(#barshh)"/>
<rect x="42.2" y="308.2" width="33.2" height="7.4" fill="#000000"/>
<rect x="42.8" y="309.2" width="31.4" height="5.2" fill="#6cd06c"/>
<rect x="42.8" y="309.2" width="31.4" height="5.2" fill="url(#barsh)"/>
<rect x="42.8" y="309.2" width="31.4" height="5.2" fill="url(#barshh)"/>
<rect x="42.2" y="316.4" width="25.2" height="7.4" fill="#000000"/>
<rect x="42.8" y="317.4" width="23.4" height="5.2" fill="#6c6cd0"/>
<rect x="42.8" y="317.4" width="23.4" height="5.2" fill="url(#barsh)"/>
<rect x="42.8" y="317.4" width="23.4" height="5.2" fill="url(#barshh)"/>
<rect x="42.2" y="324.6" width="40.2" height="7.4" fill="#000000"/>
<rect x="42.8" y="325.6" width="38.4" height="5.2" fill="#6cd0d0"/>
<rect x="42.8" y="325.6" width="38.4" height="5.2" fill="url(#barsh)"/>
<rect x="42.8" y="325.6" width="38.4" height="5.2" fill="url(#barshh)"/>
<rect x="42.2" y="332.8" width="22.1" height="7.4" fill="#000000"/>
<rect x="42.8" y="333.8" width="20.3" height="5.2" fill="#d06cd0"/>
<rect x="42.8" y="333.8" width="20.3" height="5.2" fill="url(#barsh)"/>
<rect x="42.8" y="333.8" width="20.3" height="5.2" fill="url(#barshh)"/>
<rect x="42.2" y="341.0" width="28.0" height="7.4" fill="#000000"/>
<rect x="42.8" y="342.0" width="26.2" height="5.2" fill="#d0d06c"/>
<rect x="42.8" y="342.0" width="26.2" height="5.2" fill="url(#barsh)"/>
<rect x="42.8" y="342.0" width="26.2" height="5.2" fill="url(#barshh)"/>
<rect x="42.2" y="370.2" width="32.2" height="7.4" fill="#000000"/>
<rect x="42.8" y="371.2" width="30.4" height="5.2" fill="#d08989"/>
<rect x="42.8" y="371.2" width="30.4" height="5.2" fill="url(#barsh)"/>
<rect x="42.8" y="371.2" width="30.4" height="5.2" fill="url(#barshh)"/>
<rect x="42.2" y="378.4" width="34.9" height="7.4" fill="#000000"/>
<rect x="42.8" y="379.4" width="33.1" height="5.2" fill="#89d089"/>
<rect x="42.8" y="379.4" width="33.1" height="5.2" fill="url(#barsh)"/>
<rect x="42.8" y="379.4" width="33.1" height="5.2" fill="url(#barshh)"/>
<rect x="42.2" y="386.6" width="34.9" height="7.4" fill="#000000"/>
<rect x="42.8" y="387.6" width="33.1" height="5.2" fill="#8989d0"/>
<rect x="42.8" y="387.6" width="33.1" height="5.2" fill="url(#barsh)"/>
<rect x="42.8" y="387.6" width="33.1" height="5.2" fill="url(#barshh)"/>
<rect x="42.2" y="394.8" width="44.2" height="7.4" fill="#000000"/>
<rect x="42.8" y="395.8" width="42.4" height="5.2" fill="#89d0d0"/>
<rect x="42.8" y="395.8" width="42.4" height="5.2" fill="url(#barsh)"/>
<rect x="42.8" y="395.8" width="42.4" height="5.2" fill="url(#barshh)"/>
<rect x="42.2" y="403.0" width="19.7" height="7.4" fill="#000000"/>
<rect x="42.8" y="404.0" width="17.9" height="5.2" fill="#d089d0"/>
<rect x="42.8" y="404.0" width="17.9" height="5.2" fill="url(#barsh)"/>
<rect x="42.8" y="404.0" width="17.9" height="5.2" fill="url(#barshh)"/>
<rect x="42.2" y="411.2" width="30.9" height="7.4" fill="#000000"/>
<rect x="42.8" y="412.2" width="29.1" height="5.2" fill="#d0d089"/>
<rect x="42.8" y="412.2" width="29.1" height="5.2" fill="url(#barsh)"/>
<rect x="42.8" y="412.2" width="29.1" height="5.2" fill="url(#barshh)"/>
<rect x="42.2" y="439.6" width="37.0" height="7.4" fill="#000000"/>
<rect x="42.8" y="440.6" width="35.2" height="5.2" fill="#d0a6a6"/>
<rect x="42.8" y="440.6" width="35.2" height="5.2" fill="url(#barsh)"/>
<rect x="42.8" y="440.6" width="35.2" height="5.2" fill="url(#barshh)"/>
<rect x="42.2" y="447.8" width="38.9" height="7.4" fill="#000000"/>
<rect x="42.8" y="448.8" width="37.1" height="5.2" fill="#a6d0a6"/>
<rect x="42.8" y="448.8" width="37.1" height="5.2" fill="url(#barsh)"/>
<rect x="42.8" y="448.8" width="37.1" height="5.2" fill="url(#barshh)"/>
<rect x="42.2" y="456.0" width="22.1" height="7.4" fill="#000000"/>
<rect x="42.8" y="457.0" width="20.3" height="5.2" fill="#a6a6d0"/>
<rect x="42.8" y="457.0" width="20.3" height="5.2" fill="url(#barsh)"/>
<rect x="42.8" y="457.0" width="20.3" height="5.2" fill="url(#barshh)"/>
<rect x="42.2" y="464.2" width="39.7" height="7.4" fill="#000000"/>
<rect x="42.8" y="465.2" width="37.9" height="5.2" fill="#a6d0d0"/>
<rect x="42.8" y="465.2" width="37.9" height="5.2" fill="url(#barsh)"/>
<rect x="42.8" y="465.2" width="37.9" height="5.2" fill="url(#barshh)"/>
<rect x="42.2" y="472.4" width="19.7" height="7.4" fill="#000000"/>
<rect x="42.8" y="473.4" width="17.9" height="5.2" fill="#d0a6d0"/>
<rect x="42.8" y="473.4" width="17.9" height="5.2" fill="url(#barsh)"/>
<rect x="42.8" y="473.4" width="17.9" height="5.2" fill="url(#barshh)"/>
<rect x="42.2" y="480.6" width="38.9" height="7.4" fill="#000000"/>
<rect x="42.8" y="481.6" width="37.1" height="5.2" fill="#d0d0a6"/>
<rect x="42.8" y="481.6" width="37.1" height="5.2" fill="url(#barsh)"/>
<rect x="42.8" y="481.6" width="37.1" height="5.2" fill="url(#barshh)"/>
<rect x="42.2" y="556.3" width="73.8" height="8.4" fill="#000000"/>
<rect x="42.8" y="557.6" width="72.0" height="5.6" fill="url(#wbar)"/>
<rect x="406.5" y="89.2" width="144.8" height="316.4" fill="#262626"/>
<text x="465.5" y="83.5" font-size="13.5" fill="#e2e2e2" text-anchor="middle">Delta L</text>
<line x1="402.5" y1="89.2" x2="406.5" y2="89.2" stroke="#d0d0d0" stroke-width="1.3"/>
<text x="384.8" y="95.3" font-size="13.6" fill="#e2e2e2" textLength="15.7" lengthAdjust="spacingAndGlyphs">15</text>
<line x1="406.5" y1="143.2" x2="551.3" y2="143.2" stroke="#a0a0a0" stroke-width="1.3"/>
<line x1="402.5" y1="143.2" x2="406.5" y2="143.2" stroke="#d0d0d0" stroke-width="1.3"/>
<text x="384.8" y="149.3" font-size="13.6" fill="#e2e2e2" textLength="15.7" lengthAdjust="spacingAndGlyphs">10</text>
<line x1="406.5" y1="194.7" x2="551.3" y2="194.7" stroke="#a0a0a0" stroke-width="1.3"/>
<line x1="402.5" y1="194.7" x2="406.5" y2="194.7" stroke="#d0d0d0" stroke-width="1.3"/>
<text x="392.6" y="200.8" font-size="13.6" fill="#e2e2e2" textLength="7.9" lengthAdjust="spacingAndGlyphs">5</text>
<line x1="406.5" y1="247.8" x2="551.3" y2="247.8" stroke="#a0a0a0" stroke-width="1.3"/>
<line x1="402.5" y1="247.8" x2="406.5" y2="247.8" stroke="#d0d0d0" stroke-width="1.3"/>
<text x="392.6" y="253.9" font-size="13.6" fill="#e2e2e2" textLength="7.9" lengthAdjust="spacingAndGlyphs">0</text>
<line x1="406.5" y1="301.0" x2="551.3" y2="301.0" stroke="#a0a0a0" stroke-width="1.3"/>
<line x1="402.5" y1="301.0" x2="406.5" y2="301.0" stroke="#d0d0d0" stroke-width="1.3"/>
<text x="387.9" y="307.1" font-size="13.6" fill="#e2e2e2" textLength="12.6" lengthAdjust="spacingAndGlyphs">-5</text>
<line x1="406.5" y1="353.7" x2="551.3" y2="353.7" stroke="#a0a0a0" stroke-width="1.3"/>
<line x1="402.5" y1="353.7" x2="406.5" y2="353.7" stroke="#d0d0d0" stroke-width="1.3"/>
<text x="380.1" y="359.8" font-size="13.6" fill="#e2e2e2" textLength="20.4" lengthAdjust="spacingAndGlyphs">-10</text>
<line x1="402.5" y1="405.6" x2="406.5" y2="405.6" stroke="#d0d0d0" stroke-width="1.3"/>
<text x="380.1" y="411.7" font-size="13.6" fill="#e2e2e2" textLength="20.4" lengthAdjust="spacingAndGlyphs">-15</text>
<rect x="406.5" y="89.2" width="144.8" height="316.4" fill="none" stroke="#a0a0a0" stroke-width="1.3"/>
<line x1="406.5" y1="405.6" x2="406.5" y2="411.1" stroke="#d0d0d0" stroke-width="1.3"/>
<line x1="551.3" y1="405.6" x2="551.3" y2="411.1" stroke="#d0d0d0" stroke-width="1.3"/>
<text x="461.2" y="421.9" font-size="13.6" fill="#e2e2e2" textLength="35.5" lengthAdjust="spacingAndGlyphs">100%</text>
<rect x="604.0" y="89.2" width="144.5" height="316.4" fill="#262626"/>
<text x="662.5" y="83.5" font-size="13.5" fill="#e2e2e2" text-anchor="middle">Delta C</text>
<line x1="600.0" y1="89.2" x2="604.0" y2="89.2" stroke="#d0d0d0" stroke-width="1.3"/>
<text x="582.3" y="95.3" font-size="13.6" fill="#e2e2e2" textLength="15.7" lengthAdjust="spacingAndGlyphs">15</text>
<line x1="604.0" y1="143.2" x2="748.5" y2="143.2" stroke="#a0a0a0" stroke-width="1.3"/>
<line x1="600.0" y1="143.2" x2="604.0" y2="143.2" stroke="#d0d0d0" stroke-width="1.3"/>
<text x="582.3" y="149.3" font-size="13.6" fill="#e2e2e2" textLength="15.7" lengthAdjust="spacingAndGlyphs">10</text>
<line x1="604.0" y1="194.7" x2="748.5" y2="194.7" stroke="#a0a0a0" stroke-width="1.3"/>
<line x1="600.0" y1="194.7" x2="604.0" y2="194.7" stroke="#d0d0d0" stroke-width="1.3"/>
<text x="590.1" y="200.8" font-size="13.6" fill="#e2e2e2" textLength="7.9" lengthAdjust="spacingAndGlyphs">5</text>
<line x1="604.0" y1="247.8" x2="748.5" y2="247.8" stroke="#a0a0a0" stroke-width="1.3"/>
<line x1="600.0" y1="247.8" x2="604.0" y2="247.8" stroke="#d0d0d0" stroke-width="1.3"/>
<text x="590.1" y="253.9" font-size="13.6" fill="#e2e2e2" textLength="7.9" lengthAdjust="spacingAndGlyphs">0</text>
<line x1="604.0" y1="301.0" x2="748.5" y2="301.0" stroke="#a0a0a0" stroke-width="1.3"/>
<line x1="600.0" y1="301.0" x2="604.0" y2="301.0" stroke="#d0d0d0" stroke-width="1.3"/>
<text x="585.4" y="307.1" font-size="13.6" fill="#e2e2e2" textLength="12.6" lengthAdjust="spacingAndGlyphs">-5</text>
<line x1="604.0" y1="353.7" x2="748.5" y2="353.7" stroke="#a0a0a0" stroke-width="1.3"/>
<line x1="600.0" y1="353.7" x2="604.0" y2="353.7" stroke="#d0d0d0" stroke-width="1.3"/>
<text x="577.6" y="359.8" font-size="13.6" fill="#e2e2e2" textLength="20.4" lengthAdjust="spacingAndGlyphs">-10</text>
<line x1="600.0" y1="405.6" x2="604.0" y2="405.6" stroke="#d0d0d0" stroke-width="1.3"/>
<text x="577.6" y="411.7" font-size="13.6" fill="#e2e2e2" textLength="20.4" lengthAdjust="spacingAndGlyphs">-15</text>
<rect x="604.0" y="89.2" width="144.5" height="316.4" fill="none" stroke="#a0a0a0" stroke-width="1.3"/>
<line x1="604.0" y1="405.6" x2="604.0" y2="411.1" stroke="#d0d0d0" stroke-width="1.3"/>
<line x1="748.5" y1="405.6" x2="748.5" y2="411.1" stroke="#d0d0d0" stroke-width="1.3"/>
<text x="658.5" y="421.9" font-size="13.6" fill="#e2e2e2" textLength="35.5" lengthAdjust="spacingAndGlyphs">100%</text>
<rect x="801.6" y="89.2" width="144.4" height="316.4" fill="#262626"/>
<text x="859.5" y="83.5" font-size="13.5" fill="#e2e2e2" text-anchor="middle">Delta H</text>
<line x1="797.6" y1="89.2" x2="801.6" y2="89.2" stroke="#d0d0d0" stroke-width="1.3"/>
<text x="779.9" y="95.3" font-size="13.6" fill="#e2e2e2" textLength="15.7" lengthAdjust="spacingAndGlyphs">15</text>
<line x1="801.6" y1="143.2" x2="946.0" y2="143.2" stroke="#a0a0a0" stroke-width="1.3"/>
<line x1="797.6" y1="143.2" x2="801.6" y2="143.2" stroke="#d0d0d0" stroke-width="1.3"/>
<text x="779.9" y="149.3" font-size="13.6" fill="#e2e2e2" textLength="15.7" lengthAdjust="spacingAndGlyphs">10</text>
<line x1="801.6" y1="194.7" x2="946.0" y2="194.7" stroke="#a0a0a0" stroke-width="1.3"/>
<line x1="797.6" y1="194.7" x2="801.6" y2="194.7" stroke="#d0d0d0" stroke-width="1.3"/>
<text x="787.7" y="200.8" font-size="13.6" fill="#e2e2e2" textLength="7.9" lengthAdjust="spacingAndGlyphs">5</text>
<line x1="801.6" y1="247.8" x2="946.0" y2="247.8" stroke="#a0a0a0" stroke-width="1.3"/>
<line x1="797.6" y1="247.8" x2="801.6" y2="247.8" stroke="#d0d0d0" stroke-width="1.3"/>
<text x="787.7" y="253.9" font-size="13.6" fill="#e2e2e2" textLength="7.9" lengthAdjust="spacingAndGlyphs">0</text>
<line x1="801.6" y1="301.0" x2="946.0" y2="301.0" stroke="#a0a0a0" stroke-width="1.3"/>
<line x1="797.6" y1="301.0" x2="801.6" y2="301.0" stroke="#d0d0d0" stroke-width="1.3"/>
<text x="783.0" y="307.1" font-size="13.6" fill="#e2e2e2" textLength="12.6" lengthAdjust="spacingAndGlyphs">-5</text>
<line x1="801.6" y1="353.7" x2="946.0" y2="353.7" stroke="#a0a0a0" stroke-width="1.3"/>
<line x1="797.6" y1="353.7" x2="801.6" y2="353.7" stroke="#d0d0d0" stroke-width="1.3"/>
<text x="775.2" y="359.8" font-size="13.6" fill="#e2e2e2" textLength="20.4" lengthAdjust="spacingAndGlyphs">-10</text>
<line x1="797.6" y1="405.6" x2="801.6" y2="405.6" stroke="#d0d0d0" stroke-width="1.3"/>
<text x="775.2" y="411.7" font-size="13.6" fill="#e2e2e2" textLength="20.4" lengthAdjust="spacingAndGlyphs">-15</text>
<rect x="801.6" y="89.2" width="144.4" height="316.4" fill="none" stroke="#a0a0a0" stroke-width="1.3"/>
<line x1="801.6" y1="405.6" x2="801.6" y2="411.1" stroke="#d0d0d0" stroke-width="1.3"/>
<line x1="946.0" y1="405.6" x2="946.0" y2="411.1" stroke="#d0d0d0" stroke-width="1.3"/>
<text x="856.1" y="421.9" font-size="13.6" fill="#e2e2e2" textLength="35.5" lengthAdjust="spacingAndGlyphs">100%</text>
<rect x="421.5" y="247.0" width="114.8" height="3.4" fill="#000000"/>
<rect x="422.6" y="247.9" width="112.6" height="1.5" fill="#b4b43c"/>
<rect x="618.2" y="226.8" width="115.8" height="21.6" fill="#000000"/>
<rect x="619.4" y="228.0" width="113.4" height="19.4" fill="url(#ybar)"/>
<line x1="816.0" y1="247.8" x2="931.0" y2="247.8" stroke="#1a1a1a" stroke-width="1.4"/>
<rect x="374.2" y="438.0" width="591.6" height="163.4" fill="#000000"/>
<rect x="394.5" y="446.6" width="99.2" height="130.8" fill="#bec0a0"/>
<rect x="394.5" y="512.0" width="99.2" height="65.4" fill="#c0c0a2"/>
<rect x="394.5" y="446.6" width="99.2" height="130.8" fill="none" stroke="#e8e8e8" stroke-width="1.2"/>
<text x="444.1" y="593.2" font-size="12" fill="#ffffff" text-anchor="middle">20%</text>
<rect x="510.2" y="446.6" width="99.2" height="130.8" fill="#c0c086"/>
<rect x="510.2" y="512.0" width="99.2" height="65.4" fill="#c0c085"/>
<rect x="510.2" y="446.6" width="99.2" height="130.8" fill="none" stroke="#e8e8e8" stroke-width="1.2"/>
<text x="559.8" y="593.2" font-size="12" fill="#ffffff" text-anchor="middle">40%</text>
<rect x="626.3" y="446.6" width="99.2" height="130.8" fill="#bebe64"/>
<rect x="626.3" y="512.0" width="99.2" height="65.4" fill="#c0be68"/>
<rect x="626.3" y="446.6" width="99.2" height="130.8" fill="none" stroke="#e8e8e8" stroke-width="1.2"/>
<text x="675.9" y="593.2" font-size="12" fill="#ffffff" text-anchor="middle">60%</text>
<rect x="741.6" y="446.6" width="99.2" height="130.8" fill="#c0bc46"/>
<rect x="741.6" y="512.0" width="99.2" height="65.4" fill="#c0bc44"/>
<rect x="741.6" y="446.6" width="99.2" height="130.8" fill="none" stroke="#e8e8e8" stroke-width="1.2"/>
<text x="791.2" y="593.2" font-size="12" fill="#ffffff" text-anchor="middle">80%</text>
<rect x="857.4" y="446.6" width="99.2" height="130.8" fill="#c0c000"/>
<rect x="857.4" y="512.0" width="99.2" height="65.4" fill="#c2c200"/>
<rect x="857.4" y="446.6" width="99.2" height="130.8" fill="none" stroke="#e8e8e8" stroke-width="1.2"/>
<text x="907.0" y="593.2" font-size="12" fill="#ffffff" text-anchor="middle">100%</text>
<text transform="translate(385.8 474.6) rotate(-90)" font-size="12.6" fill="#ffffff" text-anchor="middle">Actual</text>
<text transform="translate(385.8 549.2) rotate(-90)" font-size="12.6" fill="#ffffff" text-anchor="middle">Target</text>
<rect x="972.0" y="57.3" width="688.0" height="557.2" fill="#1e1e1e"/>
<rect x="979.3" y="63.8" width="680.7" height="544.7" fill="#323232"/>
<text x="1319.5" y="81.3" font-size="13.5" fill="#e2e2e2" text-anchor="middle" textLength="84.0" lengthAdjust="spacingAndGlyphs">CIE 1976 u'v'</text>
<rect x="1016.5" y="87.6" width="643.5" height="490.9" fill="#262626"/>
<g clip-path="url(#plotclip)"><g clip-path="url(#locus)">
<path d="M1227.4 195.6L1505.0 149.4L1475.2 146.6Z" fill="url(#w1)"/><path d="M1227.4 195.6L1485.2 147.6L1455.4 144.8Z" fill="url(#w2)"/><path d="M1227.4 195.6L1465.3 145.7L1435.5 142.9Z" fill="url(#w3)"/><path d="M1227.4 195.6L1445.4 143.9L1415.6 141.1Z" fill="url(#w4)"/><path d="M1227.4 195.6L1425.6 142.0L1395.8 139.2Z" fill="url(#w5)"/><path d="M1227.4 195.6L1405.7 140.1L1375.9 137.3Z" fill="url(#w6)"/><path d="M1227.4 195.6L1385.8 138.3L1356.0 135.5Z" fill="url(#w7)"/><path d="M1227.4 195.6L1366.0 136.4L1336.2 133.6Z" fill="url(#w8)"/><path d="M1227.4 195.6L1346.1 134.5L1316.3 131.7Z" fill="url(#w9)"/><path d="M1227.4 195.6L1326.2 132.7L1296.4 129.9Z" fill="url(#w10)"/><path d="M1227.4 195.6L1306.4 130.8L1276.6 128.0Z" fill="url(#w11)"/><path d="M1227.4 195.6L1286.5 128.9L1256.7 126.2Z" fill="url(#w12)"/><path d="M1227.4 195.6L1266.6 127.1L1236.8 124.3Z" fill="url(#w13)"/><path d="M1227.4 195.6L1246.8 125.2L1217.0 122.4Z" fill="url(#w14)"/><path d="M1227.4 195.6L1226.9 123.4L1197.1 120.6Z" fill="url(#w15)"/><path d="M1227.4 195.6L1207.0 121.5L1177.2 118.7Z" fill="url(#w16)"/><path d="M1227.4 195.6L1187.2 119.6L1157.4 116.8Z" fill="url(#w17)"/><path d="M1227.4 195.6L1167.3 117.8L1147.4 115.9L1149.0 125.4Z" fill="url(#w18)"/><path d="M1227.4 195.6L1147.4 115.9L1152.0 144.4Z" fill="url(#w19)"/><path d="M1227.4 195.6L1150.5 134.9L1155.1 163.5Z" fill="url(#w20)"/><path d="M1227.4 195.6L1153.6 154.0L1158.2 182.5Z" fill="url(#w21)"/><path d="M1227.4 195.6L1156.7 173.0L1161.3 201.5Z" fill="url(#w22)"/><path d="M1227.4 195.6L1159.7 192.0L1164.3 220.6Z" fill="url(#w23)"/><path d="M1227.4 195.6L1162.8 211.1L1167.4 239.6Z" fill="url(#w24)"/><path d="M1227.4 195.6L1165.9 230.1L1170.5 258.6Z" fill="url(#w25)"/><path d="M1227.4 195.6L1169.0 249.1L1173.6 277.7Z" fill="url(#w26)"/><path d="M1227.4 195.6L1172.0 268.2L1176.6 296.7Z" fill="url(#w27)"/><path d="M1227.4 195.6L1175.1 287.2L1179.7 315.7Z" fill="url(#w28)"/><path d="M1227.4 195.6L1178.2 306.2L1182.8 334.8Z" fill="url(#w29)"/><path d="M1227.4 195.6L1181.3 325.2L1185.9 353.8Z" fill="url(#w30)"/><path d="M1227.4 195.6L1184.3 344.3L1189.0 372.8Z" fill="url(#w31)"/><path d="M1227.4 195.6L1187.4 363.3L1192.0 391.9Z" fill="url(#w32)"/><path d="M1227.4 195.6L1190.5 382.3L1195.1 410.9Z" fill="url(#w33)"/><path d="M1227.4 195.6L1193.6 401.4L1198.2 429.9Z" fill="url(#w34)"/><path d="M1227.4 195.6L1196.6 420.4L1201.3 448.9Z" fill="url(#w35)"/><path d="M1227.4 195.6L1199.7 439.4L1202.8 458.5L1211.2 449.9Z" fill="url(#w36)"/><path d="M1227.4 195.6L1202.8 458.5L1228.0 432.7Z" fill="url(#w37)"/><path d="M1227.4 195.6L1219.6 441.3L1244.8 415.5Z" fill="url(#w38)"/><path d="M1227.4 195.6L1236.4 424.1L1261.6 398.4Z" fill="url(#w39)"/><path d="M1227.4 195.6L1253.2 407.0L1278.4 381.2Z" fill="url(#w40)"/><path d="M1227.4 195.6L1270.0 389.8L1295.2 364.0Z" fill="url(#w41)"/><path d="M1227.4 195.6L1286.8 372.6L1311.9 346.9Z" fill="url(#w42)"/><path d="M1227.4 195.6L1303.5 355.5L1328.7 329.7Z" fill="url(#w43)"/><path d="M1227.4 195.6L1320.3 338.3L1345.5 312.5Z" fill="url(#w44)"/><path d="M1227.4 195.6L1337.1 321.1L1362.3 295.4Z" fill="url(#w45)"/><path d="M1227.4 195.6L1353.9 304.0L1379.1 278.2Z" fill="url(#w46)"/><path d="M1227.4 195.6L1370.7 286.8L1395.9 261.0Z" fill="url(#w47)"/><path d="M1227.4 195.6L1387.5 269.6L1412.7 243.9Z" fill="url(#w48)"/><path d="M1227.4 195.6L1404.3 252.4L1429.5 226.7Z" fill="url(#w49)"/><path d="M1227.4 195.6L1421.1 235.3L1446.3 209.5Z" fill="url(#w50)"/><path d="M1227.4 195.6L1437.9 218.1L1463.1 192.4Z" fill="url(#w51)"/><path d="M1227.4 195.6L1454.7 200.9L1479.9 175.2Z" fill="url(#w52)"/><path d="M1227.4 195.6L1471.5 183.8L1496.6 158.0Z" fill="url(#w53)"/><path d="M1227.4 195.6L1488.2 166.6L1505.0 149.4L1495.1 148.5Z" fill="url(#w54)"/><path d="M1497.0 150.8L3233.0 313.6L5020.4 -1320.3L2964.1 -1349.3Z" fill="#ff0000"/><path d="M1149.8 118.2L880.9 -1544.7L-1055.6 -1890.1L-586.3 -44.6Z" fill="#00ff00"/><path d="M1203.5 450.8L-263.6 1950.9L-114.6 3930.2L1472.4 2113.7Z" fill="#0000ff"/><path d="M1503.3 151.4L1474.9 148.7L2831.5 -1361.8L3002.0 -1345.8Z" fill="#ff0200"/><path d="M1481.2 149.3L1459.1 147.2L2736.9 -1370.6L2869.4 -1358.2Z" fill="#ff0600"/><path d="M1465.4 147.8L1443.3 145.8L2642.2 -1379.5L2774.7 -1367.1Z" fill="#ff0a00"/><path d="M1449.6 146.3L1427.5 144.3L2547.5 -1388.4L2680.0 -1376.0Z" fill="#ff0f00"/><path d="M1433.8 144.9L1411.7 142.8L2452.8 -1397.3L2585.4 -1384.9Z" fill="#ff1500"/><path d="M1418.0 143.4L1395.9 141.3L2358.1 -1406.2L2490.7 -1393.7Z" fill="#ff1b00"/><path d="M1402.3 141.9L1380.2 139.8L2263.4 -1415.0L2396.0 -1402.6Z" fill="#ff2200"/><path d="M1386.5 140.4L1364.4 138.4L2168.7 -1423.9L2301.3 -1411.5Z" fill="#ff2a00"/><path d="M1370.7 138.9L1348.6 136.9L2074.0 -1432.8L2206.6 -1420.4Z" fill="#ff3300"/><path d="M1354.9 137.5L1332.8 135.4L1979.3 -1441.7L2111.9 -1429.3Z" fill="#ff3e00"/><path d="M1339.1 136.0L1317.0 133.9L1884.6 -1450.6L2017.2 -1438.1Z" fill="#ff4b00"/><path d="M1323.4 134.5L1301.3 132.4L1789.9 -1459.5L1922.5 -1447.0Z" fill="#ff5900"/><path d="M1307.6 133.0L1285.5 131.0L1695.3 -1468.3L1827.8 -1455.9Z" fill="#ff6b00"/><path d="M1291.8 131.5L1269.7 129.5L1600.6 -1477.2L1733.1 -1464.8Z" fill="#ff8200"/><path d="M1276.0 130.1L1253.9 128.0L1505.9 -1486.1L1638.4 -1473.7Z" fill="#ff9e00"/><path d="M1260.2 128.6L1238.1 126.5L1411.2 -1495.0L1543.7 -1482.5Z" fill="#ffc300"/><path d="M1244.4 127.1L1222.3 125.0L1316.5 -1503.9L1449.1 -1491.4Z" fill="#fff500"/><path d="M1228.7 125.6L1206.6 123.6L1221.8 -1512.7L1354.4 -1500.3Z" fill="#cdff00"/><path d="M1212.9 124.1L1190.8 122.1L1127.1 -1521.6L1259.7 -1509.2Z" fill="#97ff00"/><path d="M1197.1 122.7L1175.0 120.6L1032.4 -1530.5L1165.0 -1518.1Z" fill="#66ff00"/><path d="M1181.3 121.2L1159.2 119.1L937.7 -1539.4L1070.3 -1526.9Z" fill="#3aff00"/><path d="M1165.5 119.7L1143.4 117.6L843.0 -1548.3L975.6 -1535.8Z" fill="#13ff00"/><path d="M1148.8 112.2L1153.2 139.4L-565.7 82.4L-592.1 -80.9Z" fill="#00ff10"/><path d="M1152.2 133.3L1155.6 154.5L-551.1 173.1L-571.6 46.1Z" fill="#00ff34"/><path d="M1154.6 148.5L1158.1 169.6L-536.4 263.8L-556.9 136.8Z" fill="#00ff5b"/><path d="M1157.1 163.6L1160.5 184.7L-521.7 354.5L-542.3 227.5Z" fill="#00ff86"/><path d="M1159.5 178.7L1162.9 199.9L-507.1 445.2L-527.6 318.2Z" fill="#00ffb6"/><path d="M1162.0 193.8L1165.4 215.0L-492.4 535.9L-512.9 408.9Z" fill="#00ffec"/><path d="M1164.4 208.9L1167.8 230.1L-477.7 626.6L-498.3 499.6Z" fill="#00dbff"/><path d="M1166.9 224.0L1170.3 245.2L-463.1 717.3L-483.6 590.4Z" fill="#00b1ff"/><path d="M1169.3 239.2L1172.7 260.3L-448.4 808.0L-468.9 681.1Z" fill="#0092ff"/><path d="M1171.7 254.3L1175.2 275.4L-433.7 898.8L-454.3 771.8Z" fill="#0079ff"/><path d="M1174.2 269.4L1177.6 290.6L-419.1 989.5L-439.6 862.5Z" fill="#0064ff"/><path d="M1176.6 284.5L1180.1 305.7L-404.4 1080.2L-425.0 953.2Z" fill="#0054ff"/><path d="M1179.1 299.6L1182.5 320.8L-389.8 1170.9L-410.3 1043.9Z" fill="#0046ff"/><path d="M1181.5 314.8L1184.9 335.9L-375.1 1261.6L-395.6 1134.6Z" fill="#003aff"/><path d="M1184.0 329.9L1187.4 351.0L-360.4 1352.3L-381.0 1225.3Z" fill="#002fff"/><path d="M1186.4 345.0L1189.8 366.2L-345.8 1443.0L-366.3 1316.0Z" fill="#0026ff"/><path d="M1188.9 360.1L1192.3 381.3L-331.1 1533.7L-351.6 1406.7Z" fill="#001fff"/><path d="M1191.3 375.2L1194.7 396.4L-316.4 1624.4L-337.0 1497.4Z" fill="#0018ff"/><path d="M1193.7 390.3L1197.2 411.5L-301.8 1715.1L-322.3 1588.1Z" fill="#0011ff"/><path d="M1196.2 405.5L1199.6 426.6L-287.1 1805.8L-307.6 1678.8Z" fill="#000cff"/><path d="M1198.6 420.6L1202.1 441.7L-272.4 1896.5L-293.0 1769.5Z" fill="#0007ff"/><path d="M1201.1 435.7L1204.5 456.9L-257.8 1987.2L-278.3 1860.2Z" fill="#0002ff"/><path d="M1198.2 456.3L1222.2 431.7L1584.4 1999.2L1440.3 2146.5Z" fill="#0700ff"/><path d="M1216.9 437.2L1235.5 418.1L1664.4 1917.4L1552.4 2031.9Z" fill="#1500ff"/><path d="M1230.2 423.5L1248.9 404.4L1744.4 1835.5L1632.4 1950.1Z" fill="#2500ff"/><path d="M1243.5 409.9L1262.2 390.8L1824.5 1753.7L1712.4 1868.3Z" fill="#3600ff"/><path d="M1256.9 396.3L1275.5 377.2L1904.5 1671.9L1792.5 1786.4Z" fill="#4a00ff"/><path d="M1270.2 382.6L1288.9 363.5L1984.5 1590.1L1872.5 1704.6Z" fill="#6000ff"/><path d="M1283.5 369.0L1302.2 349.9L2064.6 1508.2L1952.5 1622.8Z" fill="#7800ff"/><path d="M1296.9 355.3L1315.6 336.3L2144.6 1426.4L2032.5 1541.0Z" fill="#9400ff"/><path d="M1310.2 341.7L1328.9 322.6L2224.6 1344.6L2112.6 1459.1Z" fill="#b400ff"/><path d="M1323.6 328.1L1342.2 309.0L2304.6 1262.8L2192.6 1377.3Z" fill="#da00ff"/><path d="M1336.9 314.4L1355.6 295.3L2384.7 1180.9L2272.6 1295.5Z" fill="#ff00f8"/><path d="M1350.2 300.8L1368.9 281.7L2464.7 1099.1L2352.7 1213.7Z" fill="#ff00cf"/><path d="M1363.6 287.2L1382.2 268.1L2544.7 1017.3L2432.7 1131.8Z" fill="#ff00ac"/><path d="M1376.9 273.5L1395.6 254.4L2624.7 935.5L2512.7 1050.0Z" fill="#ff008f"/><path d="M1390.2 259.9L1408.9 240.8L2704.8 853.6L2592.7 968.2Z" fill="#ff0075"/><path d="M1403.6 246.2L1422.3 227.2L2784.8 771.8L2672.8 886.4Z" fill="#ff005f"/><path d="M1416.9 232.6L1435.6 213.5L2864.8 690.0L2752.8 804.5Z" fill="#ff004c"/><path d="M1430.3 219.0L1448.9 199.9L2944.9 608.2L2832.8 722.7Z" fill="#ff003a"/><path d="M1443.6 205.3L1462.3 186.2L3024.9 526.3L2912.8 640.9Z" fill="#ff002b"/><path d="M1456.9 191.7L1475.6 172.6L3104.9 444.5L2992.9 559.1Z" fill="#ff001d"/><path d="M1470.3 178.1L1488.9 159.0L3184.9 362.7L3072.9 477.2Z" fill="#ff0011"/><path d="M1483.6 164.4L1502.3 145.3L3265.0 280.9L3152.9 395.4Z" fill="#ff0005"/>
<foreignObject x="1016.5" y="87.6" width="638.5" height="493.0"><div style="width:638.5px;height:493.0px;background-color:#fff;background-image:conic-gradient(from 0deg at 480.5px 63.2px,#ffff00 0deg,#ffff00 40deg,#ffff00 44.6deg,#ff0000 44.7deg,#ff0000 84.7deg,#ff0000 95.3deg,#ff00ff 95.4deg,#ff00ff 135.4deg,#ff00ff 175.4deg,#ff00ff 215.4deg,#ff01ff 224.5deg,#ff1aff 233.1deg,#ff32ff 239.6deg,#ff4cff 244.7deg,#ff67ff 248.8deg,#ff83ff 252.1deg,#ffa0ff 254.8deg,#ffc0ff 257.1deg,#ffe0ff 259deg,#ffffff 260.5deg,#ffffc5 263.2deg,#ffff8c 266.2deg,#ffff53 269.6deg,#ffff1b 273.4deg,#ffff00 275.4deg,#ffff00 315.4deg,#ffff00 355.4deg,#ffff00 360deg),conic-gradient(from 0deg at 133.2px 30.6px,#ffff00 0deg,#ffff00 40deg,#ffff00 80deg,#ffff01 95.5deg,#ffff32 106.5deg,#ffff5e 114.7deg,#ffff86 121.2deg,#ffffaf 126.6deg,#ffffd7 131.1deg,#ffffff 134.9deg,#d2ffff 139.2deg,#a6ffff 144.1deg,#79ffff 149.9deg,#4bffff 157deg,#18ffff 166.1deg,#00ffff 170.9deg,#00ffff 210.9deg,#00ffff 250.9deg,#00ffff 275.3deg,#00ff00 275.4deg,#00ff00 315.4deg,#00ff00 350.8deg,#ffff00 350.9deg,#ffff00 360deg),conic-gradient(from 0deg at 187.0px 363.2px,#92ffff 0deg,#ceffff 3.1deg,#fffeff 5.4deg,#ffdeff 7deg,#ffbeff 8.9deg,#ffa0ff 11.2deg,#ff83ff 14deg,#ff67ff 17.4deg,#ff4dff 21.6deg,#ff34ff 26.9deg,#ff1bff 33.8deg,#ff03ff 43deg,#ff00ff 44.9deg,#ff00ff 84.9deg,#ff00ff 124.9deg,#ff00ff 164.9deg,#ff00ff 170.7deg,#0000ff 170.8deg,#0000ff 210.8deg,#0000ff 224.3deg,#00ffff 224.4deg,#00ffff 264.4deg,#00ffff 304.4deg,#00ffff 344.4deg,#01ffff 350.9deg,#3dffff 355deg,#78ffff 358.6deg,#92ffff 360deg);background-blend-mode:darken"></div></foreignObject>
<path d="M900 0H1800V700H900ZM1497.0 150.8L1149.8 118.2L1203.5 450.8Z" fill="rgba(0,0,0,0.4)" fill-rule="evenodd"/>
</g></g>
<line x1="1016.5" y1="87.6" x2="1016.5" y2="584.5" stroke="#b8b8b8" stroke-width="1.4"/>
<line x1="1016.5" y1="87.6" x2="1660.0" y2="87.6" stroke="#b0b0b0" stroke-width="1.4"/>
<line x1="1011.5" y1="578.5" x2="1660.0" y2="578.5" stroke="#b8b8b8" stroke-width="1.4"/>
<text x="1003.2" y="586.6" font-size="13.4" fill="#e2e2e2" textLength="7.7" lengthAdjust="spacingAndGlyphs">0</text>
<text x="1012.6" y="600.8" font-size="13.4" fill="#e2e2e2" textLength="7.7" lengthAdjust="spacingAndGlyphs">0</text>
<line x1="1011.0" y1="539.2" x2="1016.5" y2="539.2" stroke="#d0d0d0" stroke-width="1.3"/>
<text x="984.3" y="544.1" font-size="13.4" fill="#e2e2e2" textLength="26.6" lengthAdjust="spacingAndGlyphs">0,05</text>
<line x1="1069.8" y1="578.5" x2="1069.8" y2="584.5" stroke="#d0d0d0" stroke-width="1.3"/>
<text x="1056.5" y="600.8" font-size="13.4" fill="#e2e2e2" textLength="26.6" lengthAdjust="spacingAndGlyphs">0,05</text>
<line x1="1011.0" y1="498.3" x2="1016.5" y2="498.3" stroke="#d0d0d0" stroke-width="1.3"/>
<text x="991.7" y="503.2" font-size="13.4" fill="#e2e2e2" textLength="19.2" lengthAdjust="spacingAndGlyphs">0,1</text>
<line x1="1123.1" y1="578.5" x2="1123.1" y2="584.5" stroke="#d0d0d0" stroke-width="1.3"/>
<text x="1113.5" y="600.8" font-size="13.4" fill="#e2e2e2" textLength="19.2" lengthAdjust="spacingAndGlyphs">0,1</text>
<line x1="1011.0" y1="457.3" x2="1016.5" y2="457.3" stroke="#d0d0d0" stroke-width="1.3"/>
<text x="984.3" y="462.2" font-size="13.4" fill="#e2e2e2" textLength="26.6" lengthAdjust="spacingAndGlyphs">0,15</text>
<line x1="1176.4" y1="578.5" x2="1176.4" y2="584.5" stroke="#d0d0d0" stroke-width="1.3"/>
<text x="1163.1" y="600.8" font-size="13.4" fill="#e2e2e2" textLength="26.6" lengthAdjust="spacingAndGlyphs">0,15</text>
<line x1="1011.0" y1="416.3" x2="1016.5" y2="416.3" stroke="#d0d0d0" stroke-width="1.3"/>
<text x="991.7" y="421.2" font-size="13.4" fill="#e2e2e2" textLength="19.2" lengthAdjust="spacingAndGlyphs">0,2</text>
<line x1="1229.7" y1="578.5" x2="1229.7" y2="584.5" stroke="#d0d0d0" stroke-width="1.3"/>
<text x="1220.1" y="600.8" font-size="13.4" fill="#e2e2e2" textLength="19.2" lengthAdjust="spacingAndGlyphs">0,2</text>
<line x1="1011.0" y1="375.3" x2="1016.5" y2="375.3" stroke="#d0d0d0" stroke-width="1.3"/>
<text x="984.3" y="380.2" font-size="13.4" fill="#e2e2e2" textLength="26.6" lengthAdjust="spacingAndGlyphs">0,25</text>
<line x1="1283.0" y1="578.5" x2="1283.0" y2="584.5" stroke="#d0d0d0" stroke-width="1.3"/>
<text x="1269.7" y="600.8" font-size="13.4" fill="#e2e2e2" textLength="26.6" lengthAdjust="spacingAndGlyphs">0,25</text>
<line x1="1011.0" y1="334.4" x2="1016.5" y2="334.4" stroke="#d0d0d0" stroke-width="1.3"/>
<text x="991.7" y="339.2" font-size="13.4" fill="#e2e2e2" textLength="19.2" lengthAdjust="spacingAndGlyphs">0,3</text>
<line x1="1336.3" y1="578.5" x2="1336.3" y2="584.5" stroke="#d0d0d0" stroke-width="1.3"/>
<text x="1326.7" y="600.8" font-size="13.4" fill="#e2e2e2" textLength="19.2" lengthAdjust="spacingAndGlyphs">0,3</text>
<line x1="1011.0" y1="293.4" x2="1016.5" y2="293.4" stroke="#d0d0d0" stroke-width="1.3"/>
<text x="984.3" y="298.3" font-size="13.4" fill="#e2e2e2" textLength="26.6" lengthAdjust="spacingAndGlyphs">0,35</text>
<line x1="1389.6" y1="578.5" x2="1389.6" y2="584.5" stroke="#d0d0d0" stroke-width="1.3"/>
<text x="1376.3" y="600.8" font-size="13.4" fill="#e2e2e2" textLength="26.6" lengthAdjust="spacingAndGlyphs">0,35</text>
<line x1="1011.0" y1="252.4" x2="1016.5" y2="252.4" stroke="#d0d0d0" stroke-width="1.3"/>
<text x="991.7" y="257.3" font-size="13.4" fill="#e2e2e2" textLength="19.2" lengthAdjust="spacingAndGlyphs">0,4</text>
<line x1="1442.9" y1="578.5" x2="1442.9" y2="584.5" stroke="#d0d0d0" stroke-width="1.3"/>
<text x="1433.3" y="600.8" font-size="13.4" fill="#e2e2e2" textLength="19.2" lengthAdjust="spacingAndGlyphs">0,4</text>
<line x1="1011.0" y1="211.4" x2="1016.5" y2="211.4" stroke="#d0d0d0" stroke-width="1.3"/>
<text x="984.3" y="216.3" font-size="13.4" fill="#e2e2e2" textLength="26.6" lengthAdjust="spacingAndGlyphs">0,45</text>
<line x1="1496.2" y1="578.5" x2="1496.2" y2="584.5" stroke="#d0d0d0" stroke-width="1.3"/>
<text x="1482.9" y="600.8" font-size="13.4" fill="#e2e2e2" textLength="26.6" lengthAdjust="spacingAndGlyphs">0,45</text>
<line x1="1011.0" y1="170.5" x2="1016.5" y2="170.5" stroke="#d0d0d0" stroke-width="1.3"/>
<text x="991.7" y="175.4" font-size="13.4" fill="#e2e2e2" textLength="19.2" lengthAdjust="spacingAndGlyphs">0,5</text>
<line x1="1549.5" y1="578.5" x2="1549.5" y2="584.5" stroke="#d0d0d0" stroke-width="1.3"/>
<text x="1539.9" y="600.8" font-size="13.4" fill="#e2e2e2" textLength="19.2" lengthAdjust="spacingAndGlyphs">0,5</text>
<line x1="1011.0" y1="129.5" x2="1016.5" y2="129.5" stroke="#d0d0d0" stroke-width="1.3"/>
<text x="984.3" y="134.4" font-size="13.4" fill="#e2e2e2" textLength="26.6" lengthAdjust="spacingAndGlyphs">0,55</text>
<line x1="1602.8" y1="578.5" x2="1602.8" y2="584.5" stroke="#d0d0d0" stroke-width="1.3"/>
<text x="1589.5" y="600.8" font-size="13.4" fill="#e2e2e2" textLength="26.6" lengthAdjust="spacingAndGlyphs">0,55</text>
<g fill="none" stroke="rgba(255,255,255,0.93)" stroke-width="1.5"><rect x="1142.1" y="110.4" width="13.6" height="13.6"/><rect x="1154.5" y="122.4" width="13.6" height="13.6"/><rect x="1166.5" y="134.4" width="13.6" height="13.6"/><rect x="1181.7" y="149.4" width="13.6" height="13.6"/><rect x="1199.6" y="166.4" width="13.6" height="13.6"/><rect x="1226.8" y="118.8" width="13.6" height="13.6"/><rect x="1226.0" y="131.0" width="13.6" height="13.6"/><rect x="1225.0" y="142.6" width="13.6" height="13.6"/><rect x="1223.7" y="155.5" width="13.6" height="13.6"/><rect x="1222.2" y="170.4" width="13.6" height="13.6"/><rect x="1157.4" y="198.4" width="13.6" height="13.6"/><rect x="1170.0" y="196.3" width="13.6" height="13.6"/><rect x="1181.7" y="194.3" width="13.6" height="13.6"/><rect x="1195.5" y="192.5" width="13.6" height="13.6"/><rect x="1208.2" y="190.5" width="13.6" height="13.6"/><rect x="1489.7" y="143.1" width="13.6" height="13.6"/><rect x="1425.8" y="153.6" width="13.6" height="13.6"/><rect x="1370.6" y="163.6" width="13.6" height="13.6"/><rect x="1321.6" y="170.6" width="13.6" height="13.6"/><rect x="1268.8" y="179.4" width="13.6" height="13.6"/><rect x="1334.8" y="300.3" width="13.6" height="13.6"/><rect x="1301.7" y="269.5" width="13.6" height="13.6"/><rect x="1275.9" y="243.4" width="13.6" height="13.6"/><rect x="1256.8" y="223.4" width="13.6" height="13.6"/><rect x="1237.7" y="204.5" width="13.6" height="13.6"/><rect x="1196.7" y="443.0" width="13.6" height="13.6"/><rect x="1204.7" y="356.4" width="13.6" height="13.6"/><rect x="1210.6" y="299.4" width="13.6" height="13.6"/><rect x="1214.6" y="254.4" width="13.6" height="13.6"/><rect x="1217.2" y="217.4" width="13.6" height="13.6"/></g>
<rect x="1219.9" y="187.6" width="13.6" height="13.6" fill="none" stroke="#000000" stroke-width="1.6"/>
<g stroke="rgba(0,0,0,0.85)" stroke-width="1.15"><circle cx="1142.5" cy="116.0" r="3.90" fill="#00c000"/><circle cx="1154.5" cy="126.9" r="3.90" fill="#44c044"/><circle cx="1166.8" cy="138.9" r="4.40" fill="#64c064"/><circle cx="1183.0" cy="152.1" r="4.40" fill="#82c082"/><circle cx="1202.0" cy="170.3" r="4.40" fill="#a0c0a0"/><circle cx="1233.5" cy="124.5" r="3.75" fill="#c0c000"/><circle cx="1232.3" cy="135.2" r="4.20" fill="#c0c044"/><circle cx="1231.2" cy="145.2" r="4.20" fill="#c0c064"/><circle cx="1229.8" cy="158.6" r="3.90" fill="#c0c082"/><circle cx="1228.1" cy="174.6" r="4.20" fill="#c0c0a0"/><circle cx="1158.6" cy="204.6" r="3.75" fill="#00c0c0"/><circle cx="1171.0" cy="201.7" r="4.40" fill="#44c0c0"/><circle cx="1184.4" cy="200.2" r="3.80" fill="#64c0c0"/><circle cx="1198.0" cy="197.9" r="4.40" fill="#82c0c0"/><circle cx="1211.7" cy="194.9" r="4.40" fill="#a0c0c0"/><circle cx="1491.8" cy="149.9" r="3.50" fill="#c00000"/><circle cx="1437.3" cy="157.8" r="3.50" fill="#c04444"/><circle cx="1385.9" cy="166.6" r="3.80" fill="#c06464"/><circle cx="1338.4" cy="174.2" r="3.90" fill="#c08282"/><circle cx="1280.9" cy="182.4" r="4.10" fill="#c0a0a0"/><circle cx="1342.2" cy="302.4" r="3.80" fill="#c000c0"/><circle cx="1313.8" cy="274.0" r="4.00" fill="#c044c0"/><circle cx="1288.0" cy="250.8" r="4.20" fill="#c064c0"/><circle cx="1266.0" cy="230.2" r="4.20" fill="#c082c0"/><circle cx="1246.0" cy="210.0" r="4.30" fill="#c0a0c0"/><circle cx="1201.0" cy="446.0" r="3.70" fill="#0000c0"/><circle cx="1208.9" cy="368.5" r="4.00" fill="#4444c0"/><circle cx="1214.5" cy="310.3" r="4.00" fill="#6464c0"/><circle cx="1220.0" cy="265.1" r="4.20" fill="#8282c0"/><circle cx="1224.0" cy="225.8" r="4.30" fill="#a0a0c0"/><circle cx="1226.7" cy="191.9" r="3.4" fill="#ffffff"/></g>
<rect x="1437.8" y="426.9" width="212.6" height="145.2" fill="#6e6e6e"/>
<rect x="1439.4" y="428.5" width="209.4" height="142.0" fill="url(#ins)"/>
<foreignObject x="1439.4" y="428.5" width="209.4" height="142.0"><div style="width:209.4px;height:142.0px;background-color:#fff;background-image:conic-gradient(from 292.281deg at 1043.1px 580.1px,#ffff1e 0deg,#ffff00 6.24deg,#ffff00 13.04deg),conic-gradient(from 107.937deg at -402.6px -204.0px,#ffff00 0deg,#ffff01 10.92deg,#ffff1f 23.24deg),conic-gradient(from 36.831deg at -1040.4px 1364.2px,#a9ffff 0deg,#d7ffff 2.68deg,#fffeff 4.74deg,#ffd8ff 6.74deg,#ffb3ff 9.06deg,#ffb0ff 9.3deg);background-blend-mode:darken"></div></foreignObject>
<g clip-path="url(#insclip)"><path d="M1036.8 224.5L2482.5 1008.6L2482.5 224.5Z" fill="rgba(0,0,0,0.4)"/></g>
<rect x="1537.2" y="492.6" width="13.8" height="13.8" fill="none" stroke="rgba(255,255,255,0.93)" stroke-width="1.5"/>
<circle cx="1550.5" cy="489.9" r="3.7" fill="#a0a000" stroke="#000000" stroke-width="1.1"/>
<text x="49.4" y="646.0" font-size="28.4" fill="#f2f2f2" textLength="232.2" lengthAdjust="spacingAndGlyphs">Avg dE2000: 1,45</text>
<text x="45.9" y="687.4" font-size="28.4" fill="#f2f2f2" textLength="241.0" lengthAdjust="spacingAndGlyphs">Max dE2000: 3,54</text>
<text x="13.9" y="734.9" font-size="28.4" fill="#f2f2f2" textLength="217.8" lengthAdjust="spacingAndGlyphs">Current Reading</text>
<text x="13.3" y="770.1" font-size="24.4" fill="#f2f2f2" textLength="102.8" lengthAdjust="spacingAndGlyphs">x: 0,4208</text>
<text x="170.0" y="770.1" font-size="24.4" fill="#f2f2f2" textLength="102.8" lengthAdjust="spacingAndGlyphs">y: 0,5086</text>
<text x="13.3" y="811.5" font-size="24.4" fill="#f2f2f2" textLength="96.1" lengthAdjust="spacingAndGlyphs">fL: 67,61</text>
<text x="13.3" y="845.4" font-size="24.4" fill="#f2f2f2" textLength="158.8" lengthAdjust="spacingAndGlyphs">cd/m²: 231,64</text>
<rect x="355.6" y="653.7" width="250.4" height="180.9" fill="#262626"/>
<text x="465.5" y="649.3" font-size="13.5" fill="#e2e2e2" text-anchor="middle" textLength="83.0" lengthAdjust="spacingAndGlyphs">RGB Balance</text>
<line x1="355.6" y1="672.6" x2="606.0" y2="672.6" stroke="#a0a0a0" stroke-width="1.3"/>
<line x1="351.6" y1="672.6" x2="355.6" y2="672.6" stroke="#d0d0d0" stroke-width="1.3"/>
<text x="325.8" y="677.9" font-size="13.6" fill="#e2e2e2" textLength="23.6" lengthAdjust="spacingAndGlyphs">104</text>
<line x1="355.6" y1="708.6" x2="606.0" y2="708.6" stroke="#a0a0a0" stroke-width="1.3"/>
<line x1="351.6" y1="708.6" x2="355.6" y2="708.6" stroke="#d0d0d0" stroke-width="1.3"/>
<text x="325.8" y="713.9" font-size="13.6" fill="#e2e2e2" textLength="23.6" lengthAdjust="spacingAndGlyphs">102</text>
<line x1="355.6" y1="744.6" x2="606.0" y2="744.6" stroke="#a0a0a0" stroke-width="1.3"/>
<line x1="351.6" y1="744.6" x2="355.6" y2="744.6" stroke="#d0d0d0" stroke-width="1.3"/>
<text x="325.8" y="749.9" font-size="13.6" fill="#e2e2e2" textLength="23.6" lengthAdjust="spacingAndGlyphs">100</text>
<line x1="355.6" y1="780.6" x2="606.0" y2="780.6" stroke="#a0a0a0" stroke-width="1.3"/>
<line x1="351.6" y1="780.6" x2="355.6" y2="780.6" stroke="#d0d0d0" stroke-width="1.3"/>
<text x="333.7" y="785.9" font-size="13.6" fill="#e2e2e2" textLength="15.7" lengthAdjust="spacingAndGlyphs">98</text>
<line x1="355.6" y1="816.6" x2="606.0" y2="816.6" stroke="#a0a0a0" stroke-width="1.3"/>
<line x1="351.6" y1="816.6" x2="355.6" y2="816.6" stroke="#d0d0d0" stroke-width="1.3"/>
<text x="333.7" y="821.9" font-size="13.6" fill="#e2e2e2" textLength="15.7" lengthAdjust="spacingAndGlyphs">96</text>
<rect x="355.6" y="653.7" width="250.4" height="180.9" fill="none" stroke="#a0a0a0" stroke-width="1.3"/>
<line x1="355.6" y1="834.6" x2="355.6" y2="840.1" stroke="#d0d0d0" stroke-width="1.3"/>
<line x1="606.0" y1="834.6" x2="606.0" y2="840.1" stroke="#d0d0d0" stroke-width="1.3"/>
<text x="481.0" y="851.2" font-size="13.6" fill="#e2e2e2" text-anchor="middle">100%</text>
<rect x="378.6" y="751.4" width="68.0" height="83.2" fill="#000000"/>
<rect x="380.2" y="753.0" width="65.2" height="81.6" fill="url(#rbar)"/>
<rect x="445.4" y="748.8" width="68.0" height="85.8" fill="#000000"/>
<rect x="447.0" y="750.4" width="65.2" height="84.2" fill="url(#gbar)"/>
<rect x="512.4" y="830.8" width="67.0" height="3.8" fill="#000000"/>
<rect x="513.6" y="832.0" width="64.6" height="1.6" fill="#5a5aa8"/>
<rect x="626.3" y="623.2" width="728.7" height="230.6" fill="#0c0c0c"/>
<rect x="628.1" y="625.0" width="725.1" height="29.9" fill="url(#thead)"/>
<text x="855.0" y="645.6" font-size="19" fill="#f4f4f4" textLength="40.0" lengthAdjust="spacingAndGlyphs" stroke="#f4f4f4" stroke-width="0.45">20%</text>
<text x="961.0" y="645.6" font-size="19" fill="#f4f4f4" textLength="40.5" lengthAdjust="spacingAndGlyphs" stroke="#f4f4f4" stroke-width="0.45">40%</text>
<text x="1067.5" y="645.6" font-size="19" fill="#f4f4f4" textLength="40.5" lengthAdjust="spacingAndGlyphs" stroke="#f4f4f4" stroke-width="0.45">60%</text>
<text x="1173.5" y="645.6" font-size="19" fill="#f4f4f4" textLength="40.5" lengthAdjust="spacingAndGlyphs" stroke="#f4f4f4" stroke-width="0.45">80%</text>
<text x="1275.0" y="645.6" font-size="19" fill="#f4f4f4" textLength="51.5" lengthAdjust="spacingAndGlyphs" stroke="#f4f4f4" stroke-width="0.45">100%</text>
<rect x="628.1" y="654.9" width="725.1" height="28.1" fill="#3e3e3e"/>
<text x="645.2" y="675.4" font-size="19" fill="#f4f4f4" font-weight="bold" textLength="86.0" lengthAdjust="spacingAndGlyphs">x: CIE31</text>
<text x="828.0" y="675.4" font-size="19" fill="#f0f0f0" textLength="67.5" lengthAdjust="spacingAndGlyphs">0,3378</text>
<text x="934.3" y="675.4" font-size="19" fill="#f0f0f0" textLength="67.5" lengthAdjust="spacingAndGlyphs">0,3606</text>
<text x="1040.6" y="675.4" font-size="19" fill="#f0f0f0" textLength="67.5" lengthAdjust="spacingAndGlyphs">0,3823</text>
<text x="1146.9" y="675.4" font-size="19" fill="#f0f0f0" textLength="67.5" lengthAdjust="spacingAndGlyphs">0,4008</text>
<text x="1253.2" y="675.4" font-size="19" fill="#f0f0f0" textLength="67.5" lengthAdjust="spacingAndGlyphs">0,4208</text>
<rect x="628.1" y="683.0" width="725.1" height="28.2" fill="#7c7c7c"/>
<text x="645.2" y="703.5" font-size="19" fill="#f4f4f4" font-weight="bold" textLength="86.0" lengthAdjust="spacingAndGlyphs">y: CIE31</text>
<text x="828.0" y="703.5" font-size="19" fill="#f0f0f0" textLength="67.5" lengthAdjust="spacingAndGlyphs">0,3724</text>
<text x="934.3" y="703.5" font-size="19" fill="#f0f0f0" textLength="67.5" lengthAdjust="spacingAndGlyphs">0,4101</text>
<text x="1040.6" y="703.5" font-size="19" fill="#f0f0f0" textLength="67.5" lengthAdjust="spacingAndGlyphs">0,4456</text>
<text x="1146.9" y="703.5" font-size="19" fill="#f0f0f0" textLength="67.5" lengthAdjust="spacingAndGlyphs">0,4755</text>
<text x="1253.2" y="703.5" font-size="19" fill="#f0f0f0" textLength="67.5" lengthAdjust="spacingAndGlyphs">0,5086</text>
<rect x="628.1" y="711.2" width="725.1" height="28.4" fill="#3e3e3e"/>
<text x="645.2" y="731.7" font-size="19" fill="#f4f4f4" font-weight="bold" textLength="13.0" lengthAdjust="spacingAndGlyphs">Y</text>
<text x="828.0" y="731.7" font-size="19" fill="#f0f0f0" textLength="93.5" lengthAdjust="spacingAndGlyphs">241,4455</text>
<text x="934.3" y="731.7" font-size="19" fill="#f0f0f0" textLength="93.5" lengthAdjust="spacingAndGlyphs">238,1695</text>
<text x="1040.6" y="731.7" font-size="19" fill="#f0f0f0" textLength="93.5" lengthAdjust="spacingAndGlyphs">235,3801</text>
<text x="1146.9" y="731.7" font-size="19" fill="#f0f0f0" textLength="93.5" lengthAdjust="spacingAndGlyphs">233,2269</text>
<text x="1253.2" y="731.7" font-size="19" fill="#f0f0f0" textLength="93.5" lengthAdjust="spacingAndGlyphs">231,6404</text>
<rect x="628.1" y="739.6" width="725.1" height="28.6" fill="#7c7c7c"/>
<text x="645.2" y="760.1" font-size="19" fill="#f4f4f4" font-weight="bold" textLength="156.5" lengthAdjust="spacingAndGlyphs">Target x:CIE31</text>
<text x="828.0" y="760.1" font-size="19" fill="#f0f0f0" textLength="67.5" lengthAdjust="spacingAndGlyphs">0,3344</text>
<text x="934.3" y="760.1" font-size="19" fill="#f0f0f0" textLength="67.5" lengthAdjust="spacingAndGlyphs">0,3564</text>
<text x="1040.6" y="760.1" font-size="19" fill="#f0f0f0" textLength="67.5" lengthAdjust="spacingAndGlyphs">0,3773</text>
<text x="1146.9" y="760.1" font-size="19" fill="#f0f0f0" textLength="67.5" lengthAdjust="spacingAndGlyphs">0,3969</text>
<text x="1253.2" y="760.1" font-size="19" fill="#f0f0f0" textLength="67.5" lengthAdjust="spacingAndGlyphs">0,4193</text>
<rect x="628.1" y="768.2" width="725.1" height="28.8" fill="#3e3e3e"/>
<text x="645.2" y="788.7" font-size="19" fill="#f4f4f4" font-weight="bold" textLength="156.5" lengthAdjust="spacingAndGlyphs">Target y:CIE31</text>
<text x="828.0" y="788.7" font-size="19" fill="#f0f0f0" textLength="67.5" lengthAdjust="spacingAndGlyphs">0,3648</text>
<text x="934.3" y="788.7" font-size="19" fill="#f0f0f0" textLength="67.5" lengthAdjust="spacingAndGlyphs">0,4013</text>
<text x="1040.6" y="788.7" font-size="19" fill="#f0f0f0" textLength="67.5" lengthAdjust="spacingAndGlyphs">0,4358</text>
<text x="1146.9" y="788.7" font-size="19" fill="#f0f0f0" textLength="67.5" lengthAdjust="spacingAndGlyphs">0,4682</text>
<text x="1253.2" y="788.7" font-size="19" fill="#f0f0f0" textLength="67.5" lengthAdjust="spacingAndGlyphs">0,5053</text>
<rect x="628.1" y="797.0" width="725.1" height="28.4" fill="#7c7c7c"/>
<text x="645.2" y="817.5" font-size="19" fill="#f4f4f4" font-weight="bold" textLength="91.0" lengthAdjust="spacingAndGlyphs">Target Y</text>
<text x="828.0" y="817.5" font-size="19" fill="#f0f0f0" textLength="93.5" lengthAdjust="spacingAndGlyphs">246,9925</text>
<text x="934.3" y="817.5" font-size="19" fill="#f0f0f0" textLength="93.5" lengthAdjust="spacingAndGlyphs">242,6570</text>
<text x="1040.6" y="817.5" font-size="19" fill="#f0f0f0" textLength="93.5" lengthAdjust="spacingAndGlyphs">239,3258</text>
<text x="1146.9" y="817.5" font-size="19" fill="#f0f0f0" textLength="93.5" lengthAdjust="spacingAndGlyphs">236,7115</text>
<text x="1253.2" y="817.5" font-size="19" fill="#f0f0f0" textLength="93.5" lengthAdjust="spacingAndGlyphs">234,1841</text>
<rect x="628.1" y="825.4" width="725.1" height="26.6" fill="#3e3e3e"/>
<text x="645.2" y="845.9" font-size="19" fill="#f4f4f4" font-weight="bold" textLength="90.0" lengthAdjust="spacingAndGlyphs">ΔE 2000</text>
<text x="828.0" y="845.9" font-size="19" fill="#f0f0f0" textLength="67.5" lengthAdjust="spacingAndGlyphs">1,8858</text>
<text x="934.3" y="845.9" font-size="19" fill="#f0f0f0" textLength="67.5" lengthAdjust="spacingAndGlyphs">1,4564</text>
<text x="1040.6" y="845.9" font-size="19" fill="#f0f0f0" textLength="67.5" lengthAdjust="spacingAndGlyphs">1,3217</text>
<text x="1146.9" y="845.9" font-size="19" fill="#f0f0f0" textLength="67.5" lengthAdjust="spacingAndGlyphs">0,9251</text>
<text x="1253.2" y="845.9" font-size="19" fill="#f0f0f0" textLength="67.5" lengthAdjust="spacingAndGlyphs">0,4411</text>
<rect x="0.0" y="866.4" width="1655.0" height="70.6" fill="url(#bbar)"/>
<rect x="1011.0" y="866.4" width="253.0" height="70.6" fill="url(#bbh)"/>
<path d="M0 867.4H50.5q5 0 5 5V942H0Z" fill="url(#pan)"/>
<circle cx="27.4" cy="879.3" r="9.6" fill="url(#circ)"/>
<path d="M22.4 882.3l5 -5.4 5 5.4z" fill="#2a2a2a"/>
<rect x="5.6" y="900" width="44" height="50" rx="4.5" fill="#ffff00" stroke="#b4b400" stroke-width="1"/>
<path d="M63.0 942V872.4q0 -5 5 -5H245.2q5 0 5 5V942Z" fill="url(#pan)"/>
<rect x="69.9" y="874.4" width="174.4" height="44.4" rx="4.5" fill="#bfc0a2" stroke="rgba(80,80,40,0.55)" stroke-width="1"/>
<text x="156.6" y="938.0" font-size="12.6" fill="#2e2e2e" text-anchor="middle" stroke="#2e2e2e" stroke-width="0.3">20%</text>
<path d="M253.0 942V872.4q0 -5 5 -5H435.2q5 0 5 5V942Z" fill="url(#pan)"/>
<rect x="259.9" y="874.4" width="174.4" height="44.4" rx="4.5" fill="#c0c086" stroke="rgba(80,80,40,0.55)" stroke-width="1"/>
<text x="346.6" y="938.0" font-size="12.6" fill="#2e2e2e" text-anchor="middle" stroke="#2e2e2e" stroke-width="0.3">40%</text>
<path d="M443.2 942V872.4q0 -5 5 -5H625.4q5 0 5 5V942Z" fill="url(#pan)"/>
<rect x="450.1" y="874.4" width="174.4" height="44.4" rx="4.5" fill="#bfbf68" stroke="rgba(80,80,40,0.55)" stroke-width="1"/>
<text x="536.8" y="938.0" font-size="12.6" fill="#2e2e2e" text-anchor="middle" stroke="#2e2e2e" stroke-width="0.3">60%</text>
<path d="M633.2 942V872.4q0 -5 5 -5H815.4q5 0 5 5V942Z" fill="url(#pan)"/>
<rect x="640.1" y="874.4" width="174.4" height="44.4" rx="4.5" fill="#bfbc48" stroke="rgba(80,80,40,0.55)" stroke-width="1"/>
<text x="726.8" y="938.0" font-size="12.6" fill="#2e2e2e" text-anchor="middle" stroke="#2e2e2e" stroke-width="0.3">80%</text>
<path d="M823.4 942V873.0q0 -5 5 -5H1006q5 0 5 5V942Z" fill="url(#pansel)"/>
<rect x="829.6" y="874.4" width="175" height="44.4" rx="4.5" fill="#c2c200" stroke="#8a8a00" stroke-width="1"/>
<text x="900.2" y="938.0" font-size="12.8" fill="#ffffff" font-weight="bold" textLength="33.6" lengthAdjust="spacingAndGlyphs">100%</text>
<path d="M1264.2 890V872.4q0 -5 5 -5H1319q5 0 5 5V890Z" fill="url(#mini1)"/>
<rect x="1264.2" y="890.0" width="59.8" height="60.0" fill="url(#mini2)"/>
<line x1="1264.2" y1="890.2" x2="1324.0" y2="890.2" stroke="#3c3c3c" stroke-width="1.3"/>
<circle cx="1294.3" cy="879.3" r="9.3" fill="url(#circ2)"/>
<path d="M1288.8 880.8l5.5 -5.2 5.5 5.2z" fill="#333333"/>
<rect x="1276.4" y="899.6" width="35.5" height="34.2" rx="4.5" fill="url(#stopo)" stroke="#2a2a2a" stroke-width="3"/>
<rect x="1285.9" y="909.1" width="17.2" height="16.7" fill="#000000"/>
<rect x="1285.9" y="909.1" width="17.2" height="8.4" fill="#1e1e1e"/>
<rect x="1325.4" y="867.4" width="58.0" height="37.4" fill="url(#cbtn2)"/>
<rect x="1384.2" y="867.4" width="55.0" height="37.4" fill="url(#cbtn2)"/>
<rect x="1440.2" y="867.4" width="55.3" height="37.4" fill="url(#cbtn2)"/>
<rect x="1497.2" y="867.4" width="54.6" height="37.4" fill="url(#cbtn2)"/>
<rect x="1553.0" y="867.4" width="55.0" height="37.4" fill="url(#cbtn2)"/>
<line x1="1383.8" y1="867.4" x2="1383.8" y2="904.8" stroke="#444444" stroke-width="1.2"/>
<line x1="1439.6" y1="867.4" x2="1439.6" y2="904.8" stroke="#444444" stroke-width="1.2"/>
<line x1="1495.9" y1="867.4" x2="1495.9" y2="904.8" stroke="#444444" stroke-width="1.2"/>
<line x1="1552.2" y1="867.4" x2="1552.2" y2="904.8" stroke="#444444" stroke-width="1.2"/>
<rect x="1608.6" y="867.4" width="60.0" height="37.4" fill="url(#dk1)"/>
<circle cx="1638" cy="887.6" r="12" fill="url(#dk2)"/>
<circle cx="1354.4" cy="886.3" r="12" fill="url(#circ)"/>
<circle cx="1411.6" cy="886.3" r="12" fill="url(#circ)"/>
<circle cx="1467.8" cy="886.3" r="12" fill="url(#circ)"/>
<circle cx="1524.4" cy="886.3" r="12" fill="url(#circ)"/>
<circle cx="1580.4" cy="886.3" r="12" fill="url(#circ)"/>
<rect x="1349.3" y="881.2" width="10.2" height="10.2" fill="#2c2c2c"/>
<path d="M1408 880.4v12l9 -6z" fill="#2c2c2c"/>
<path d="M1463.8 881h-2.7v10.8h2.7M1471.8 881h2.7v10.8h-2.7" fill="none" stroke="#2c2c2c" stroke-width="2.1"/>
<path d="M1464.9 886.4h5.8" stroke="#2c2c2c" stroke-width="1.6" stroke-dasharray="1.7 0.9"/>
<path d="M1524.4 886.3C1521.6 882 1516 882.2 1516 886.3C1516 890.4 1521.6 890.6 1524.4 886.3C1527.2 882 1532.8 882.2 1532.8 886.3C1532.8 890.4 1527.2 890.6 1524.4 886.3Z" fill="none" stroke="#2c2c2c" stroke-width="2.1"/>
<path d="M1574.6 885.4a6 6 0 0 1 10.6 -2.6M1586.2 887.2a6 6 0 0 1 -10.6 2.6" fill="none" stroke="#2c2c2c" stroke-width="2.5"/>
<path d="M1587.6 879.2v5.8h-5.8zM1573.2 893.4v-5.8h5.8z" fill="#2c2c2c"/>
<rect x="1325.4" y="906.2" width="170.1" height="40.0" fill="url(#cbtn)"/>
<rect x="1497.2" y="906.2" width="170.0" height="40.0" fill="url(#cbtn)"/>
<line x1="1325.4" y1="905.5" x2="1655.0" y2="905.5" stroke="#3c3c3c" stroke-width="1.4"/>
<line x1="1496.4" y1="905.0" x2="1496.4" y2="937.0" stroke="#444444" stroke-width="1.3"/>
<circle cx="1364.1" cy="924.8" r="12.3" fill="url(#circ)"/>
<circle cx="1631.8" cy="924.8" r="12.3" fill="url(#circ)"/>
<path d="M1363.6 918.4l-5.4 6.4 5.4 6.4M1369.8 918.4l-5.4 6.4 5.4 6.4" fill="none" stroke="#444444" stroke-width="1.9"/>
<path d="M1626.6 918.4l5.4 6.4 -5.4 6.4M1632.8 918.4l5.4 6.4 -5.4 6.4" fill="none" stroke="#444444" stroke-width="1.9"/>
<text x="1398.0" y="937.6" font-size="30.6" fill="#343434" textLength="62.0" lengthAdjust="spacingAndGlyphs" stroke="#343434" stroke-width="0.9">Back</text>
<text x="1531.5" y="937.6" font-size="30.6" fill="#343434" textLength="63.5" lengthAdjust="spacingAndGlyphs" stroke="#343434" stroke-width="0.9">Next</text>
</svg>
</body></html>
